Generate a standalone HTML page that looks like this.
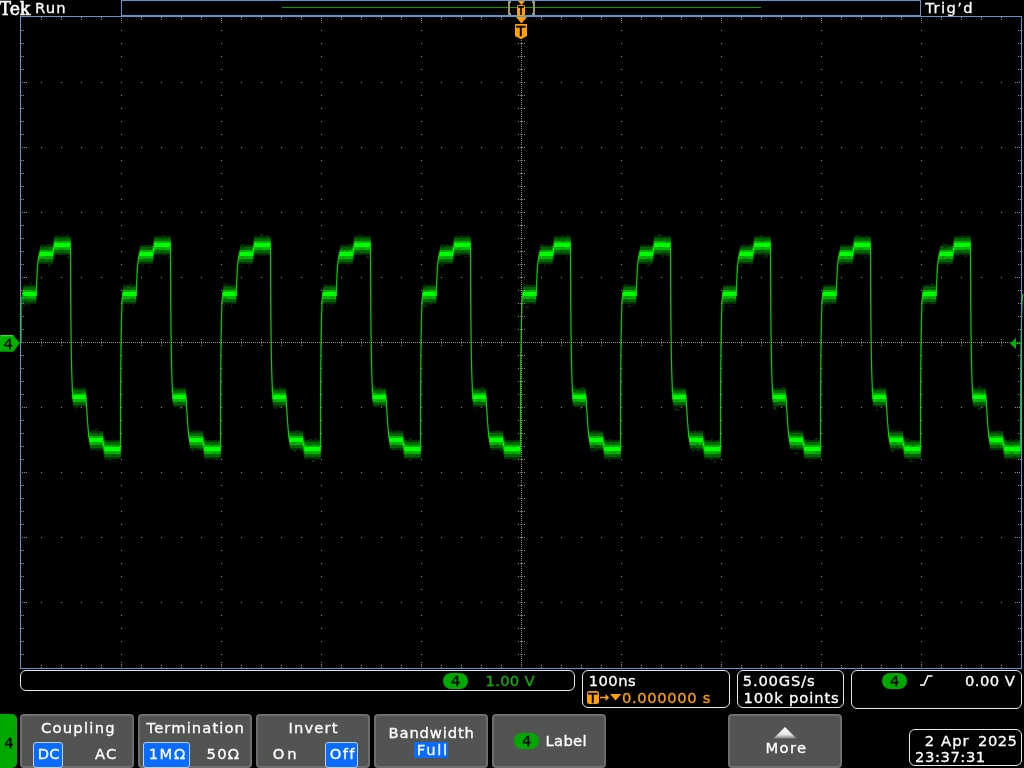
<!DOCTYPE html><html><head><meta charset="utf-8"><title>Tek</title><style>
html,body{margin:0;padding:0;background:#000;}
body{width:1024px;height:768px;position:relative;overflow:hidden;font-family:"DejaVu Sans","Liberation Sans",sans-serif;color:#fff;}
.t{position:absolute;white-space:nowrap;line-height:0;-webkit-text-stroke:0.3px currentColor;}
.box{position:absolute;border:1px solid #e8e8e8;border-radius:6px;box-sizing:border-box;}
.btn{position:absolute;top:714px;height:54px;width:114px;background:#525452;border-radius:4px;box-sizing:border-box;border:2px solid #6e6e6e;}
.sel{position:absolute;background:#0a6cff;border:1px solid #bccdee;border-radius:3px;box-sizing:border-box;}
.pill{position:absolute;width:25px;height:16px;border-radius:8px;background:#00a800;}
</style></head><body>
<div class="btn" style="left:20px"></div>
<div class="btn" style="left:138px"></div>
<div class="btn" style="left:256px"></div>
<div class="btn" style="left:374px"></div>
<div class="btn" style="left:492px"></div>
<div class="btn" style="left:728px"></div>
<div style="position:absolute;left:-6px;top:714px;width:23px;height:54px;background:#00a800;border-radius:5px"></div>
<div class="sel" style="left:33px;top:742px;width:30px;height:26px"></div>
<div class="sel" style="left:143px;top:742px;width:47px;height:26px"></div>
<div class="sel" style="left:325px;top:742px;width:33px;height:26px"></div>
<div style="position:absolute;left:414px;top:742px;width:34px;height:16px;background:#0a6cff"></div>
<div class="box" style="left:20px;top:670px;width:555px;height:21px"></div>
<div class="box" style="left:582px;top:670px;width:148px;height:38px"></div>
<div class="box" style="left:737px;top:670px;width:107px;height:38px"></div>
<div class="box" style="left:851px;top:670px;width:171px;height:39px"></div>
<div class="box" style="left:909px;top:729px;width:113px;height:37px"></div>
<div class="pill" style="left:443px;top:673px"></div>
<div class="pill" style="left:882px;top:673px"></div>
<div class="pill" style="left:514px;top:733px"></div>
<div style="position:absolute;left:587px;top:691px;width:12px;height:13px;background:#ffa000;border-radius:2.5px"></div>
<svg width="1024" height="768" viewBox="0 0 1024 768" style="position:absolute;left:0;top:0">
<path d="M23.50 285H36.2V304H21.30zM40.30 245H52.9V264H38.10zM52.90 240.5H54.1V259.5H52.90zM54.10 236H70.7V255H54.10zM71.30 388H86.1V407H73.50zM88.10 431H103.1V450H90.30zM103.10 435.5H104.3V454.5H103.10zM104.30 440H120.7V459H104.30zM123.50 285H136.2V304H121.30zM140.30 245H152.9V264H138.10zM152.90 240.5H154.1V259.5H152.90zM154.10 236H170.7V255H154.10zM171.30 388H186.1V407H173.50zM188.10 431H203.1V450H190.30zM203.10 435.5H204.3V454.5H203.10zM204.30 440H220.7V459H204.30zM223.50 285H236.2V304H221.30zM240.30 245H252.9V264H238.10zM252.90 240.5H254.1V259.5H252.90zM254.10 236H270.7V255H254.10zM271.30 388H286.1V407H273.50zM288.10 431H303.1V450H290.30zM303.10 435.5H304.3V454.5H303.10zM304.30 440H320.7V459H304.30zM323.50 285H336.2V304H321.30zM340.30 245H352.9V264H338.10zM352.90 240.5H354.1V259.5H352.90zM354.10 236H370.7V255H354.10zM371.30 388H386.1V407H373.50zM388.10 431H403.1V450H390.30zM403.10 435.5H404.3V454.5H403.10zM404.30 440H420.7V459H404.30zM423.50 285H436.2V304H421.30zM440.30 245H452.9V264H438.10zM452.90 240.5H454.1V259.5H452.90zM454.10 236H470.7V255H454.10zM471.30 388H486.1V407H473.50zM488.10 431H503.1V450H490.30zM503.10 435.5H504.3V454.5H503.10zM504.30 440H520.7V459H504.30zM523.50 285H536.2V304H521.30zM540.30 245H552.9V264H538.10zM552.90 240.5H554.1V259.5H552.90zM554.10 236H570.7V255H554.10zM571.30 388H586.1V407H573.50zM588.10 431H603.1V450H590.30zM603.10 435.5H604.3V454.5H603.10zM604.30 440H620.7V459H604.30zM623.50 285H636.2V304H621.30zM640.30 245H652.9V264H638.10zM652.90 240.5H654.1V259.5H652.90zM654.10 236H670.7V255H654.10zM671.30 388H686.1V407H673.50zM688.10 431H703.1V450H690.30zM703.10 435.5H704.3V454.5H703.10zM704.30 440H720.7V459H704.30zM723.50 285H736.2V304H721.30zM740.30 245H752.9V264H738.10zM752.90 240.5H754.1V259.5H752.90zM754.10 236H770.7V255H754.10zM771.30 388H786.1V407H773.50zM788.10 431H803.1V450H790.30zM803.10 435.5H804.3V454.5H803.10zM804.30 440H820.7V459H804.30zM823.50 285H836.2V304H821.30zM840.30 245H852.9V264H838.10zM852.90 240.5H854.1V259.5H852.90zM854.10 236H870.7V255H854.10zM871.30 388H886.1V407H873.50zM888.10 431H903.1V450H890.30zM903.10 435.5H904.3V454.5H903.10zM904.30 440H920.7V459H904.30zM923.50 285H936.2V304H921.30zM940.30 245H952.9V264H938.10zM952.90 240.5H954.1V259.5H952.90zM954.10 236H970.7V255H954.10zM971.30 388H986.1V407H973.50zM988.10 431H1003.1V450H990.30zM1003.10 435.5H1004.3V454.5H1003.10zM1004.30 440H1020.7V459H1004.30z" fill="#003400"/>
<path d="M23.27 287H36.2V302H21.53zM40.07 247H52.9V262H38.33zM52.90 242.5H54.1V257.5H52.90zM54.10 238H70.7V253H54.10zM71.53 390H86.1V405H73.27zM88.33 433H103.1V448H90.07zM103.10 437.5H104.3V452.5H103.10zM104.30 442H120.7V457H104.30zM123.27 287H136.2V302H121.53zM140.07 247H152.9V262H138.33zM152.90 242.5H154.1V257.5H152.90zM154.10 238H170.7V253H154.10zM171.53 390H186.1V405H173.27zM188.33 433H203.1V448H190.07zM203.10 437.5H204.3V452.5H203.10zM204.30 442H220.7V457H204.30zM223.27 287H236.2V302H221.53zM240.07 247H252.9V262H238.33zM252.90 242.5H254.1V257.5H252.90zM254.10 238H270.7V253H254.10zM271.53 390H286.1V405H273.27zM288.33 433H303.1V448H290.07zM303.10 437.5H304.3V452.5H303.10zM304.30 442H320.7V457H304.30zM323.27 287H336.2V302H321.53zM340.07 247H352.9V262H338.33zM352.90 242.5H354.1V257.5H352.90zM354.10 238H370.7V253H354.10zM371.53 390H386.1V405H373.27zM388.33 433H403.1V448H390.07zM403.10 437.5H404.3V452.5H403.10zM404.30 442H420.7V457H404.30zM423.27 287H436.2V302H421.53zM440.07 247H452.9V262H438.33zM452.90 242.5H454.1V257.5H452.90zM454.10 238H470.7V253H454.10zM471.53 390H486.1V405H473.27zM488.33 433H503.1V448H490.07zM503.10 437.5H504.3V452.5H503.10zM504.30 442H520.7V457H504.30zM523.27 287H536.2V302H521.53zM540.07 247H552.9V262H538.33zM552.90 242.5H554.1V257.5H552.90zM554.10 238H570.7V253H554.10zM571.53 390H586.1V405H573.27zM588.33 433H603.1V448H590.07zM603.10 437.5H604.3V452.5H603.10zM604.30 442H620.7V457H604.30zM623.27 287H636.2V302H621.53zM640.07 247H652.9V262H638.33zM652.90 242.5H654.1V257.5H652.90zM654.10 238H670.7V253H654.10zM671.53 390H686.1V405H673.27zM688.33 433H703.1V448H690.07zM703.10 437.5H704.3V452.5H703.10zM704.30 442H720.7V457H704.30zM723.27 287H736.2V302H721.53zM740.07 247H752.9V262H738.33zM752.90 242.5H754.1V257.5H752.90zM754.10 238H770.7V253H754.10zM771.53 390H786.1V405H773.27zM788.33 433H803.1V448H790.07zM803.10 437.5H804.3V452.5H803.10zM804.30 442H820.7V457H804.30zM823.27 287H836.2V302H821.53zM840.07 247H852.9V262H838.33zM852.90 242.5H854.1V257.5H852.90zM854.10 238H870.7V253H854.10zM871.53 390H886.1V405H873.27zM888.33 433H903.1V448H890.07zM903.10 437.5H904.3V452.5H903.10zM904.30 442H920.7V457H904.30zM923.27 287H936.2V302H921.53zM940.07 247H952.9V262H938.33zM952.90 242.5H954.1V257.5H952.90zM954.10 238H970.7V253H954.10zM971.53 390H986.1V405H973.27zM988.33 433H1003.1V448H990.07zM1003.10 437.5H1004.3V452.5H1003.10zM1004.30 442H1020.7V457H1004.30z" fill="#006800"/>
<path d="M22.92 290H36.2V299H21.88zM39.72 250H52.9V259H38.68zM52.90 245.5H54.1V254.5H52.90zM54.10 241H70.7V250H54.10zM71.88 393H86.1V402H72.92zM88.68 436H103.1V445H89.72zM103.10 440.5H104.3V449.5H103.10zM104.30 445H120.7V454H104.30zM122.92 290H136.2V299H121.88zM139.72 250H152.9V259H138.68zM152.90 245.5H154.1V254.5H152.90zM154.10 241H170.7V250H154.10zM171.88 393H186.1V402H172.92zM188.68 436H203.1V445H189.72zM203.10 440.5H204.3V449.5H203.10zM204.30 445H220.7V454H204.30zM222.92 290H236.2V299H221.88zM239.72 250H252.9V259H238.68zM252.90 245.5H254.1V254.5H252.90zM254.10 241H270.7V250H254.10zM271.88 393H286.1V402H272.92zM288.68 436H303.1V445H289.72zM303.10 440.5H304.3V449.5H303.10zM304.30 445H320.7V454H304.30zM322.92 290H336.2V299H321.88zM339.72 250H352.9V259H338.68zM352.90 245.5H354.1V254.5H352.90zM354.10 241H370.7V250H354.10zM371.88 393H386.1V402H372.92zM388.68 436H403.1V445H389.72zM403.10 440.5H404.3V449.5H403.10zM404.30 445H420.7V454H404.30zM422.92 290H436.2V299H421.88zM439.72 250H452.9V259H438.68zM452.90 245.5H454.1V254.5H452.90zM454.10 241H470.7V250H454.10zM471.88 393H486.1V402H472.92zM488.68 436H503.1V445H489.72zM503.10 440.5H504.3V449.5H503.10zM504.30 445H520.7V454H504.30zM522.92 290H536.2V299H521.88zM539.72 250H552.9V259H538.68zM552.90 245.5H554.1V254.5H552.90zM554.10 241H570.7V250H554.10zM571.88 393H586.1V402H572.92zM588.68 436H603.1V445H589.72zM603.10 440.5H604.3V449.5H603.10zM604.30 445H620.7V454H604.30zM622.92 290H636.2V299H621.88zM639.72 250H652.9V259H638.68zM652.90 245.5H654.1V254.5H652.90zM654.10 241H670.7V250H654.10zM671.88 393H686.1V402H672.92zM688.68 436H703.1V445H689.72zM703.10 440.5H704.3V449.5H703.10zM704.30 445H720.7V454H704.30zM722.92 290H736.2V299H721.88zM739.72 250H752.9V259H738.68zM752.90 245.5H754.1V254.5H752.90zM754.10 241H770.7V250H754.10zM771.88 393H786.1V402H772.92zM788.68 436H803.1V445H789.72zM803.10 440.5H804.3V449.5H803.10zM804.30 445H820.7V454H804.30zM822.92 290H836.2V299H821.88zM839.72 250H852.9V259H838.68zM852.90 245.5H854.1V254.5H852.90zM854.10 241H870.7V250H854.10zM871.88 393H886.1V402H872.92zM888.68 436H903.1V445H889.72zM903.10 440.5H904.3V449.5H903.10zM904.30 445H920.7V454H904.30zM922.92 290H936.2V299H921.88zM939.72 250H952.9V259H938.68zM952.90 245.5H954.1V254.5H952.90zM954.10 241H970.7V250H954.10zM971.88 393H986.1V402H972.92zM988.68 436H1003.1V445H989.72zM1003.10 440.5H1004.3V449.5H1003.10zM1004.30 445H1020.7V454H1004.30z" fill="#00b400"/>
<path d="M22.69 292H36.2V296H22.23zM39.49 252H52.9V256H39.03zM52.90 247.5H54.1V251.5H52.90zM54.10 243H70.7V247H54.10zM72.11 395H86.1V399H72.57zM88.91 438H103.1V442H89.37zM103.10 442.5H104.3V446.5H103.10zM104.30 447H120.7V451H104.30zM122.69 292H136.2V296H122.23zM139.49 252H152.9V256H139.03zM152.90 247.5H154.1V251.5H152.90zM154.10 243H170.7V247H154.10zM172.11 395H186.1V399H172.57zM188.91 438H203.1V442H189.37zM203.10 442.5H204.3V446.5H203.10zM204.30 447H220.7V451H204.30zM222.69 292H236.2V296H222.23zM239.49 252H252.9V256H239.03zM252.90 247.5H254.1V251.5H252.90zM254.10 243H270.7V247H254.10zM272.11 395H286.1V399H272.57zM288.91 438H303.1V442H289.37zM303.10 442.5H304.3V446.5H303.10zM304.30 447H320.7V451H304.30zM322.69 292H336.2V296H322.23zM339.49 252H352.9V256H339.03zM352.90 247.5H354.1V251.5H352.90zM354.10 243H370.7V247H354.10zM372.11 395H386.1V399H372.57zM388.91 438H403.1V442H389.37zM403.10 442.5H404.3V446.5H403.10zM404.30 447H420.7V451H404.30zM422.69 292H436.2V296H422.23zM439.49 252H452.9V256H439.03zM452.90 247.5H454.1V251.5H452.90zM454.10 243H470.7V247H454.10zM472.11 395H486.1V399H472.57zM488.91 438H503.1V442H489.37zM503.10 442.5H504.3V446.5H503.10zM504.30 447H520.7V451H504.30zM522.69 292H536.2V296H522.23zM539.49 252H552.9V256H539.03zM552.90 247.5H554.1V251.5H552.90zM554.10 243H570.7V247H554.10zM572.11 395H586.1V399H572.57zM588.91 438H603.1V442H589.37zM603.10 442.5H604.3V446.5H603.10zM604.30 447H620.7V451H604.30zM622.69 292H636.2V296H622.23zM639.49 252H652.9V256H639.03zM652.90 247.5H654.1V251.5H652.90zM654.10 243H670.7V247H654.10zM672.11 395H686.1V399H672.57zM688.91 438H703.1V442H689.37zM703.10 442.5H704.3V446.5H703.10zM704.30 447H720.7V451H704.30zM722.69 292H736.2V296H722.23zM739.49 252H752.9V256H739.03zM752.90 247.5H754.1V251.5H752.90zM754.10 243H770.7V247H754.10zM772.11 395H786.1V399H772.57zM788.91 438H803.1V442H789.37zM803.10 442.5H804.3V446.5H803.10zM804.30 447H820.7V451H804.30zM822.69 292H836.2V296H822.23zM839.49 252H852.9V256H839.03zM852.90 247.5H854.1V251.5H852.90zM854.10 243H870.7V247H854.10zM872.11 395H886.1V399H872.57zM888.91 438H903.1V442H889.37zM903.10 442.5H904.3V446.5H903.10zM904.30 447H920.7V451H904.30zM922.69 292H936.2V296H922.23zM939.49 252H952.9V256H939.03zM952.90 247.5H954.1V251.5H952.90zM954.10 243H970.7V247H954.10zM972.11 395H986.1V399H972.57zM988.91 438H1003.1V442H989.37zM1003.10 442.5H1004.3V446.5H1003.10zM1004.30 447H1020.7V451H1004.30z" fill="#00ff00"/>
<path d="M28 304h1v2h-1zM23 306h1v2h-1zM24 304h2v1h-2zM31 283h1v1h-1zM29 283h3v1h-3zM50 244h1v1h-1zM48 264h1v1h-1zM49 264h1v2h-1zM48 266h3v1h-3zM47 244h3v1h-3zM57 235h1v1h-1zM67 234h1v2h-1zM67 256h2v2h-2zM66 235h3v2h-3zM62 234h2v1h-2zM75 387h1v2h-1zM76 407h1v2h-1zM75 387h2v1h-2zM75 407h3v1h-3zM82 387h2v2h-2zM91 450h1v1h-1zM92 430h2v2h-2zM95 429h3v1h-3zM97 450h3v1h-3zM94 430h1v1h-1zM115 461h1v1h-1zM112 439h1v2h-1zM113 460h2v1h-2zM106 459h2v1h-2zM109 459h2v2h-2zM124 284h1v1h-1zM123 304h1v1h-1zM133 304h1v2h-1zM130 284h2v2h-2zM131 283h1v1h-1zM148 266h1v1h-1zM142 266h1v1h-1zM142 264h1v2h-1zM141 244h1v2h-1zM148 266h3v1h-3zM163 255h1v1h-1zM162 235h3v1h-3zM166 255h1v1h-1zM159 257h2v1h-2zM168 256h1v2h-1zM180 408h3v1h-3zM179 407h2v2h-2zM177 386h1v1h-1zM174 387h1v1h-1zM173 387h1v1h-1zM195 430h3v2h-3zM192 450h1v2h-1zM193 430h1v1h-1zM190 430h1v1h-1zM200 450h2v1h-2zM217 459h1v1h-1zM206 438h1v1h-1zM216 459h2v1h-2zM206 460h1v1h-1zM214 459h2v1h-2zM231 283h1v1h-1zM224 304h1v2h-1zM223 283h3v1h-3zM227 283h1v2h-1zM231 305h1v2h-1zM248 265h1v1h-1zM250 264h1v1h-1zM240 266h3v1h-3zM248 265h1v2h-1zM241 244h3v1h-3zM266 235h3v2h-3zM264 255h2v1h-2zM263 255h1v1h-1zM260 255h1v1h-1zM260 234h3v2h-3zM279 407h2v1h-2zM274 386h2v1h-2zM278 386h3v1h-3zM273 387h2v1h-2zM274 407h3v2h-3zM300 450h2v1h-2zM298 430h1v1h-1zM296 430h2v1h-2zM294 450h2v2h-2zM293 450h2v2h-2zM312 460h3v2h-3zM309 439h3v1h-3zM318 459h1v1h-1zM315 439h2v2h-2zM314 438h1v1h-1zM331 283h1v1h-1zM326 305h1v2h-1zM327 305h1v1h-1zM331 305h3v1h-3zM324 284h1v2h-1zM350 244h3v1h-3zM347 265h1v1h-1zM346 265h2v1h-2zM343 266h1v1h-1zM348 244h1v1h-1zM367 256h2v1h-2zM357 235h1v1h-1zM358 234h3v1h-3zM366 257h3v1h-3zM361 235h3v1h-3zM373 386h3v1h-3zM374 387h1v1h-1zM374 387h2v1h-2zM378 387h1v2h-1zM378 387h2v1h-2zM392 450h1v1h-1zM400 450h1v2h-1zM398 430h2v1h-2zM391 430h1v2h-1zM391 429h1v1h-1zM409 438h2v1h-2zM410 459h1v2h-1zM409 460h1v1h-1zM406 438h1v1h-1zM409 439h3v1h-3zM423 304h2v2h-2zM428 304h1v1h-1zM424 283h1v1h-1zM431 283h3v1h-3zM424 305h3v2h-3zM441 264h3v1h-3zM447 244h1v1h-1zM440 265h1v1h-1zM441 265h2v2h-2zM442 244h1v1h-1zM461 235h1v1h-1zM467 234h1v2h-1zM468 256h1v1h-1zM457 255h3v1h-3zM464 256h2v1h-2zM481 386h1v2h-1zM475 408h1v1h-1zM481 386h1v2h-1zM479 386h1v1h-1zM482 387h1v1h-1zM500 450h2v1h-2zM494 452h1v2h-1zM490 452h2v1h-2zM498 430h1v2h-1zM500 451h3v1h-3zM513 459h1v2h-1zM506 438h1v1h-1zM515 439h2v1h-2zM514 459h2v1h-2zM512 459h2v1h-2zM523 283h1v2h-1zM523 284h3v1h-3zM525 306h1v1h-1zM523 284h1v1h-1zM526 306h3v2h-3zM544 265h2v1h-2zM541 244h1v1h-1zM543 244h1v2h-1zM545 264h1v1h-1zM549 264h1v2h-1zM567 256h1v1h-1zM567 234h1v2h-1zM568 235h2v2h-2zM566 257h1v2h-1zM562 235h1v1h-1zM580 407h2v2h-2zM573 386h3v1h-3zM581 387h1v1h-1zM573 408h1v1h-1zM582 387h2v1h-2zM595 450h1v1h-1zM591 451h3v1h-3zM595 430h1v1h-1zM596 450h1v2h-1zM593 430h3v2h-3zM609 459h2v2h-2zM611 439h1v1h-1zM609 460h2v1h-2zM608 439h1v1h-1zM608 461h1v1h-1zM629 306h3v1h-3zM633 305h1v1h-1zM633 304h1v1h-1zM628 305h2v2h-2zM624 284h3v1h-3zM648 265h1v1h-1zM648 264h2v2h-2zM647 265h1v1h-1zM646 265h1v2h-1zM645 244h1v1h-1zM666 255h3v1h-3zM668 257h1v1h-1zM661 235h1v2h-1zM662 255h2v2h-2zM658 234h3v2h-3zM674 387h2v2h-2zM674 409h1v1h-1zM675 387h3v1h-3zM676 409h3v2h-3zM675 408h1v2h-1zM692 450h2v2h-2zM699 451h3v1h-3zM697 450h2v1h-2zM700 430h1v2h-1zM695 429h1v2h-1zM711 459h3v1h-3zM714 461h2v2h-2zM711 460h1v1h-1zM718 439h1v1h-1zM711 439h2v2h-2zM723 305h3v1h-3zM724 306h1v1h-1zM729 305h1v1h-1zM728 306h1v1h-1zM731 306h2v1h-2zM750 244h3v1h-3zM750 264h1v1h-1zM740 266h1v1h-1zM743 244h1v1h-1zM740 265h2v2h-2zM765 255h3v2h-3zM758 257h1v1h-1zM761 256h1v1h-1zM763 257h3v1h-3zM760 235h2v1h-2zM782 387h1v2h-1zM783 387h3v2h-3zM774 409h3v1h-3zM776 387h1v2h-1zM773 407h3v2h-3zM795 452h3v2h-3zM792 429h1v1h-1zM795 430h1v2h-1zM797 430h1v1h-1zM799 430h1v1h-1zM815 438h3v2h-3zM807 439h2v2h-2zM809 460h1v2h-1zM812 459h1v1h-1zM811 460h1v1h-1zM829 284h1v1h-1zM829 304h1v1h-1zM825 304h1v2h-1zM826 284h1v1h-1zM824 305h2v1h-2zM840 264h2v1h-2zM845 244h1v1h-1zM841 264h2v1h-2zM841 264h1v1h-1zM850 264h1v1h-1zM856 235h3v1h-3zM865 235h1v1h-1zM864 256h1v1h-1zM859 257h1v1h-1zM865 257h3v1h-3zM878 387h1v2h-1zM878 387h1v2h-1zM880 386h1v1h-1zM876 409h2v2h-2zM879 387h1v1h-1zM891 429h1v1h-1zM891 450h3v2h-3zM898 429h2v1h-2zM891 430h3v2h-3zM899 452h1v1h-1zM909 460h3v2h-3zM906 438h2v2h-2zM908 439h1v1h-1zM909 439h1v1h-1zM912 461h3v1h-3zM931 283h2v1h-2zM932 304h1v1h-1zM931 284h1v1h-1zM932 284h2v1h-2zM924 306h2v1h-2zM945 244h3v1h-3zM943 243h2v1h-2zM942 264h1v1h-1zM947 264h1v1h-1zM947 265h2v1h-2zM965 255h1v1h-1zM967 235h3v2h-3zM961 235h2v1h-2zM964 256h3v1h-3zM956 255h3v1h-3zM981 407h3v1h-3zM978 407h1v2h-1zM978 386h3v2h-3zM974 386h1v1h-1zM978 408h3v2h-3zM993 450h1v1h-1zM990 430h1v2h-1zM1000 451h1v1h-1zM990 430h1v2h-1zM998 430h1v1h-1zM1012 460h1v1h-1zM1016 439h2v2h-2zM1009 439h2v1h-2zM1006 460h2v1h-2zM1015 439h1v1h-1z" fill="#003000" shape-rendering="crispEdges"/>
<path d="M24 301h3v1h-3zM23 286h3v1h-3zM26 285h3v1h-3zM32 301h3v1h-3zM23 285h1v1h-1zM31 299h1v1h-1zM43 248h1v1h-1zM41 259h3v1h-3zM48 260h2v1h-2zM47 246h2v1h-2zM41 261h3v1h-3zM42 247h2v1h-2zM61 237h1v1h-1zM63 239h1v1h-1zM60 239h1v1h-1zM62 253h2v1h-2zM57 253h1v1h-1zM62 250h3v1h-3zM81 388h3v1h-3zM80 406h3v1h-3zM79 404h2v1h-2zM79 405h1v1h-1zM79 391h1v1h-1zM74 405h1v1h-1zM95 445h3v1h-3zM97 433h3v1h-3zM98 434h1v1h-1zM98 433h2v1h-2zM98 449h1v1h-1zM94 432h3v1h-3zM111 441h2v1h-2zM109 443h1v1h-1zM113 455h1v1h-1zM109 440h2v1h-2zM113 455h3v1h-3zM116 441h1v1h-1zM124 287h3v1h-3zM129 288h1v1h-1zM123 288h2v1h-2zM127 288h3v1h-3zM132 299h2v1h-2zM131 287h2v1h-2zM148 248h1v1h-1zM143 245h2v1h-2zM141 262h3v1h-3zM148 246h1v1h-1zM147 263h2v1h-2zM149 248h3v1h-3zM166 238h2v1h-2zM160 253h1v1h-1zM159 237h3v1h-3zM162 238h2v1h-2zM166 238h1v1h-1zM167 254h2v1h-2zM179 402h3v1h-3zM179 406h1v1h-1zM181 405h3v1h-3zM178 402h1v1h-1zM173 390h3v1h-3zM179 402h1v1h-1zM194 449h2v1h-2zM192 446h2v1h-2zM190 431h2v1h-2zM190 449h1v1h-1zM198 449h1v1h-1zM197 448h1v1h-1zM217 440h2v1h-2zM213 442h1v1h-1zM210 440h2v1h-2zM210 455h2v1h-2zM214 443h2v1h-2zM206 443h2v1h-2zM232 300h2v1h-2zM230 299h1v1h-1zM232 287h3v1h-3zM223 303h3v1h-3zM229 303h3v1h-3zM225 303h3v1h-3zM244 248h1v1h-1zM243 262h3v1h-3zM247 246h2v1h-2zM247 259h3v1h-3zM240 248h3v1h-3zM241 247h3v1h-3zM263 252h2v1h-2zM259 237h1v1h-1zM265 238h1v1h-1zM267 250h3v1h-3zM261 254h1v1h-1zM260 251h1v1h-1zM274 404h2v1h-2zM277 402h1v1h-1zM274 402h1v1h-1zM275 402h1v1h-1zM279 403h3v1h-3zM276 404h2v1h-2zM296 433h1v1h-1zM292 434h1v1h-1zM298 449h2v1h-2zM293 446h2v1h-2zM297 433h2v1h-2zM298 434h1v1h-1zM309 456h2v1h-2zM316 456h2v1h-2zM310 442h1v1h-1zM306 457h2v1h-2zM315 440h2v1h-2zM307 458h2v1h-2zM332 301h1v1h-1zM327 285h1v1h-1zM323 299h3v1h-3zM330 300h2v1h-2zM326 303h2v1h-2zM326 288h3v1h-3zM343 248h2v1h-2zM343 248h2v1h-2zM344 246h2v1h-2zM349 247h2v1h-2zM343 261h2v1h-2zM340 247h3v1h-3zM356 250h1v1h-1zM357 252h2v1h-2zM357 239h3v1h-3zM362 250h2v1h-2zM362 236h1v1h-1zM367 239h2v1h-2zM382 389h3v1h-3zM373 389h1v1h-1zM380 405h3v1h-3zM379 404h2v1h-2zM380 405h1v1h-1zM375 402h1v1h-1zM397 448h3v1h-3zM392 433h1v1h-1zM396 434h2v1h-2zM398 432h3v1h-3zM394 445h2v1h-2zM399 446h2v1h-2zM410 441h1v1h-1zM406 443h1v1h-1zM407 458h2v1h-2zM408 454h2v1h-2zM416 441h1v1h-1zM416 455h3v1h-3zM425 303h3v1h-3zM424 287h3v1h-3zM429 299h3v1h-3zM429 299h2v1h-2zM429 299h1v1h-1zM432 301h2v1h-2zM442 247h3v1h-3zM441 261h1v1h-1zM447 259h1v1h-1zM442 262h1v1h-1zM445 261h1v1h-1zM441 247h3v1h-3zM460 239h3v1h-3zM462 251h2v1h-2zM463 253h3v1h-3zM458 236h1v1h-1zM465 253h2v1h-2zM459 253h2v1h-2zM480 390h2v1h-2zM476 403h1v1h-1zM482 390h2v1h-2zM478 402h3v1h-3zM480 402h1v1h-1zM481 391h2v1h-2zM494 446h2v1h-2zM499 446h1v1h-1zM495 448h1v1h-1zM493 431h1v1h-1zM494 445h3v1h-3zM494 446h3v1h-3zM509 457h2v1h-2zM508 440h1v1h-1zM509 442h3v1h-3zM513 441h1v1h-1zM516 454h1v1h-1zM512 440h2v1h-2zM525 299h3v1h-3zM524 285h2v1h-2zM530 303h3v1h-3zM523 301h2v1h-2zM530 302h1v1h-1zM525 286h1v1h-1zM548 262h2v1h-2zM548 245h3v1h-3zM540 248h2v1h-2zM549 248h2v1h-2zM546 246h3v1h-3zM549 247h1v1h-1zM559 236h1v1h-1zM556 237h3v1h-3zM566 250h3v1h-3zM563 238h1v1h-1zM557 239h3v1h-3zM560 251h2v1h-2zM573 391h3v1h-3zM577 388h1v1h-1zM578 389h2v1h-2zM580 390h3v1h-3zM580 403h3v1h-3zM581 390h2v1h-2zM599 431h3v1h-3zM595 446h3v1h-3zM598 448h1v1h-1zM598 446h3v1h-3zM592 448h2v1h-2zM594 434h3v1h-3zM617 456h2v1h-2zM610 441h1v1h-1zM616 454h1v1h-1zM609 457h2v1h-2zM606 456h1v1h-1zM612 443h3v1h-3zM625 301h2v1h-2zM630 285h2v1h-2zM632 303h2v1h-2zM625 300h3v1h-3zM623 302h2v1h-2zM624 299h1v1h-1zM646 245h2v1h-2zM640 261h1v1h-1zM646 260h3v1h-3zM649 246h2v1h-2zM643 261h2v1h-2zM648 261h1v1h-1zM660 239h2v1h-2zM666 251h2v1h-2zM663 252h2v1h-2zM665 237h3v1h-3zM666 238h2v1h-2zM660 236h2v1h-2zM677 405h1v1h-1zM676 389h3v1h-3zM680 389h3v1h-3zM681 402h1v1h-1zM679 390h1v1h-1zM680 406h2v1h-2zM690 446h3v1h-3zM691 448h3v1h-3zM697 431h1v1h-1zM693 447h3v1h-3zM692 432h2v1h-2zM695 448h2v1h-2zM716 440h1v1h-1zM712 458h3v1h-3zM712 440h3v1h-3zM712 441h2v1h-2zM706 443h1v1h-1zM713 440h3v1h-3zM725 285h2v1h-2zM728 301h1v1h-1zM732 285h3v1h-3zM730 303h3v1h-3zM723 301h1v1h-1zM732 301h3v1h-3zM743 247h2v1h-2zM740 247h2v1h-2zM741 263h2v1h-2zM747 259h2v1h-2zM740 245h3v1h-3zM740 245h1v1h-1zM756 251h3v1h-3zM765 236h3v1h-3zM758 250h3v1h-3zM765 239h2v1h-2zM762 252h2v1h-2zM765 253h1v1h-1zM776 388h2v1h-2zM779 406h2v1h-2zM774 403h3v1h-3zM774 404h1v1h-1zM782 402h3v1h-3zM781 405h2v1h-2zM798 431h3v1h-3zM791 434h1v1h-1zM799 434h2v1h-2zM794 447h2v1h-2zM791 433h2v1h-2zM794 446h1v1h-1zM808 454h1v1h-1zM811 458h1v1h-1zM806 454h1v1h-1zM814 457h3v1h-3zM806 442h1v1h-1zM811 443h1v1h-1zM830 301h1v1h-1zM823 286h3v1h-3zM830 300h2v1h-2zM826 286h2v1h-2zM828 300h1v1h-1zM826 285h3v1h-3zM844 259h1v1h-1zM843 261h2v1h-2zM844 248h1v1h-1zM841 259h2v1h-2zM846 245h1v1h-1zM844 245h1v1h-1zM858 238h1v1h-1zM865 239h3v1h-3zM865 239h2v1h-2zM856 254h1v1h-1zM862 236h3v1h-3zM864 251h2v1h-2zM880 406h2v1h-2zM873 406h3v1h-3zM875 391h1v1h-1zM874 390h1v1h-1zM875 402h1v1h-1zM877 388h3v1h-3zM892 448h3v1h-3zM896 431h1v1h-1zM896 447h3v1h-3zM899 449h3v1h-3zM890 431h2v1h-2zM895 447h2v1h-2zM916 440h1v1h-1zM906 454h3v1h-3zM916 454h3v1h-3zM916 440h3v1h-3zM915 454h1v1h-1zM907 440h3v1h-3zM932 288h3v1h-3zM929 303h1v1h-1zM928 303h2v1h-2zM927 302h3v1h-3zM930 285h2v1h-2zM926 288h2v1h-2zM948 247h1v1h-1zM946 260h2v1h-2zM942 248h3v1h-3zM949 259h3v1h-3zM948 262h1v1h-1zM944 247h3v1h-3zM960 254h1v1h-1zM960 252h1v1h-1zM965 239h2v1h-2zM957 251h2v1h-2zM965 251h1v1h-1zM959 236h2v1h-2zM982 391h1v1h-1zM979 404h2v1h-2zM980 403h3v1h-3zM981 389h3v1h-3zM975 403h2v1h-2zM978 402h1v1h-1zM991 431h3v1h-3zM990 433h1v1h-1zM997 445h3v1h-3zM998 433h3v1h-3zM999 447h1v1h-1zM999 433h1v1h-1zM1013 456h3v1h-3zM1006 443h1v1h-1zM1012 440h3v1h-3zM1013 443h1v1h-1zM1009 440h1v1h-1zM1008 442h3v1h-3z" fill="#000" fill-opacity="0.32" shape-rendering="crispEdges"/>
<path d="M29 298h2v1h-2zM24 296h4v1h-4zM31 291h4v1h-4zM24 298h4v1h-4zM47 250h3v1h-3zM41 258h4v1h-4zM45 256h3v1h-3zM47 257h4v1h-4zM58 249h3v1h-3zM60 248h4v1h-4zM61 248h4v1h-4zM59 241h2v1h-2zM75 399h2v1h-2zM73 393h2v1h-2zM75 393h4v1h-4zM78 393h4v1h-4zM94 442h4v1h-4zM92 437h3v1h-3zM98 444h4v1h-4zM95 437h4v1h-4zM112 446h4v1h-4zM113 452h2v1h-2zM116 445h3v1h-3zM112 452h3v1h-3zM123 296h4v1h-4zM130 298h4v1h-4zM131 298h3v1h-3zM125 291h4v1h-4zM144 258h3v1h-3zM148 258h3v1h-3zM143 258h4v1h-4zM144 251h4v1h-4zM162 248h3v1h-3zM159 247h3v1h-3zM157 247h4v1h-4zM156 249h3v1h-3zM173 393h4v1h-4zM177 401h2v1h-2zM176 399h2v1h-2zM174 393h3v1h-3zM191 443h4v1h-4zM197 443h4v1h-4zM198 437h3v1h-3zM193 437h3v1h-3zM211 445h2v1h-2zM211 445h3v1h-3zM213 453h3v1h-3zM216 446h2v1h-2zM223 298h4v1h-4zM226 290h2v1h-2zM223 296h2v1h-2zM224 297h3v1h-3zM245 256h3v1h-3zM242 257h2v1h-2zM240 256h3v1h-3zM241 251h4v1h-4zM259 248h3v1h-3zM262 242h2v1h-2zM256 248h3v1h-3zM262 242h3v1h-3zM273 400h4v1h-4zM281 394h4v1h-4zM274 400h2v1h-2zM280 394h4v1h-4zM291 442h2v1h-2zM298 442h2v1h-2zM293 442h3v1h-3zM293 443h2v1h-2zM313 446h3v1h-3zM307 446h2v1h-2zM308 445h4v1h-4zM316 445h3v1h-3zM323 296h3v1h-3zM323 291h2v1h-2zM330 297h4v1h-4zM324 291h3v1h-3zM346 251h2v1h-2zM340 251h4v1h-4zM346 250h2v1h-2zM342 257h3v1h-3zM361 248h4v1h-4zM359 247h3v1h-3zM363 248h2v1h-2zM359 248h4v1h-4zM375 394h4v1h-4zM378 400h3v1h-3zM378 393h4v1h-4zM381 400h2v1h-2zM394 442h4v1h-4zM393 437h3v1h-3zM392 437h2v1h-2zM392 444h3v1h-3zM409 451h2v1h-2zM411 445h2v1h-2zM409 445h3v1h-3zM415 446h4v1h-4zM429 296h2v1h-2zM426 297h3v1h-3zM426 297h2v1h-2zM425 290h3v1h-3zM443 257h4v1h-4zM443 251h3v1h-3zM443 257h2v1h-2zM448 257h2v1h-2zM458 248h3v1h-3zM457 242h2v1h-2zM461 247h3v1h-3zM457 249h3v1h-3zM477 401h4v1h-4zM476 399h3v1h-3zM473 394h2v1h-2zM479 399h2v1h-2zM490 436h4v1h-4zM493 442h2v1h-2zM496 444h3v1h-3zM495 437h2v1h-2zM506 453h4v1h-4zM511 453h4v1h-4zM513 453h4v1h-4zM513 446h2v1h-2zM527 290h2v1h-2zM524 296h3v1h-3zM523 298h3v1h-3zM529 298h4v1h-4zM540 250h2v1h-2zM541 251h4v1h-4zM545 250h2v1h-2zM540 251h2v1h-2zM562 241h3v1h-3zM561 247h3v1h-3zM556 247h4v1h-4zM561 249h4v1h-4zM577 394h2v1h-2zM580 393h2v1h-2zM574 401h3v1h-3zM574 399h4v1h-4zM592 443h3v1h-3zM593 437h4v1h-4zM594 444h3v1h-3zM592 437h4v1h-4zM614 451h4v1h-4zM613 446h2v1h-2zM610 452h4v1h-4zM606 446h4v1h-4zM631 291h2v1h-2zM626 296h4v1h-4zM624 297h4v1h-4zM631 297h2v1h-2zM647 251h2v1h-2zM642 251h2v1h-2zM647 258h4v1h-4zM643 256h2v1h-2zM657 247h4v1h-4zM658 247h4v1h-4zM666 241h4v1h-4zM666 242h2v1h-2zM673 400h3v1h-3zM675 400h4v1h-4zM676 394h3v1h-3zM681 393h4v1h-4zM698 437h4v1h-4zM694 442h3v1h-3zM696 444h3v1h-3zM690 442h3v1h-3zM714 453h4v1h-4zM712 446h4v1h-4zM716 453h4v1h-4zM716 446h2v1h-2zM730 290h2v1h-2zM729 298h4v1h-4zM725 297h3v1h-3zM731 290h2v1h-2zM741 256h3v1h-3zM744 258h4v1h-4zM742 258h3v1h-3zM740 256h3v1h-3zM760 241h4v1h-4zM761 247h3v1h-3zM762 249h2v1h-2zM756 242h3v1h-3zM781 394h4v1h-4zM776 394h2v1h-2zM774 399h2v1h-2zM778 401h4v1h-4zM793 443h2v1h-2zM791 436h2v1h-2zM790 442h4v1h-4zM797 436h3v1h-3zM816 451h4v1h-4zM815 452h4v1h-4zM816 452h2v1h-2zM811 451h3v1h-3zM825 297h4v1h-4zM831 297h2v1h-2zM825 297h3v1h-3zM829 291h2v1h-2zM847 256h4v1h-4zM848 257h2v1h-2zM840 256h4v1h-4zM842 257h3v1h-3zM860 248h4v1h-4zM857 248h2v1h-2zM863 247h2v1h-2zM859 249h2v1h-2zM873 394h2v1h-2zM877 401h2v1h-2zM880 394h4v1h-4zM880 399h2v1h-2zM893 443h3v1h-3zM895 444h3v1h-3zM890 444h3v1h-3zM892 442h4v1h-4zM912 445h2v1h-2zM910 451h2v1h-2zM911 446h4v1h-4zM907 453h2v1h-2zM926 298h4v1h-4zM929 297h4v1h-4zM923 291h3v1h-3zM926 298h3v1h-3zM946 250h2v1h-2zM946 258h4v1h-4zM941 257h3v1h-3zM942 256h3v1h-3zM956 247h2v1h-2zM965 247h3v1h-3zM964 249h3v1h-3zM965 249h3v1h-3zM981 393h2v1h-2zM977 399h4v1h-4zM981 394h3v1h-3zM981 401h3v1h-3zM992 444h4v1h-4zM991 436h2v1h-2zM991 444h2v1h-2zM997 444h3v1h-3zM1011 452h2v1h-2zM1010 453h3v1h-3zM1010 445h3v1h-3zM1009 452h4v1h-4z" fill="#000" fill-opacity="0.2" shape-rendering="crispEdges"/>
<path d="M20.5 343 C20.5 273 20.9 310 22.7 294M36.4 296 C36.7 270 37.3 262 39.3 254M70.5 245 C70.7 335 71.0 375 72.9 397M86.1 397 C86.7 413 87.9 426 88.9 438M120.5 449 C120.5 379 120.9 310 122.7 294M136.4 296 C136.7 270 137.3 262 139.3 254M170.5 245 C170.7 335 171.0 375 172.9 397M186.1 397 C186.7 413 187.9 426 188.9 438M220.5 449 C220.5 379 220.9 310 222.7 294M236.4 296 C236.7 270 237.3 262 239.3 254M270.5 245 C270.7 335 271.0 375 272.9 397M286.1 397 C286.7 413 287.9 426 288.9 438M320.5 449 C320.5 379 320.9 310 322.7 294M336.4 296 C336.7 270 337.3 262 339.3 254M370.5 245 C370.7 335 371.0 375 372.9 397M386.1 397 C386.7 413 387.9 426 388.9 438M420.5 449 C420.5 379 420.9 310 422.7 294M436.4 296 C436.7 270 437.3 262 439.3 254M470.5 245 C470.7 335 471.0 375 472.9 397M486.1 397 C486.7 413 487.9 426 488.9 438M520.5 449 C520.5 379 520.9 310 522.7 294M536.4 296 C536.7 270 537.3 262 539.3 254M570.5 245 C570.7 335 571.0 375 572.9 397M586.1 397 C586.7 413 587.9 426 588.9 438M620.5 449 C620.5 379 620.9 310 622.7 294M636.4 296 C636.7 270 637.3 262 639.3 254M670.5 245 C670.7 335 671.0 375 672.9 397M686.1 397 C686.7 413 687.9 426 688.9 438M720.5 449 C720.5 379 720.9 310 722.7 294M736.4 296 C736.7 270 737.3 262 739.3 254M770.5 245 C770.7 335 771.0 375 772.9 397M786.1 397 C786.7 413 787.9 426 788.9 438M820.5 449 C820.5 379 820.9 310 822.7 294M836.4 296 C836.7 270 837.3 262 839.3 254M870.5 245 C870.7 335 871.0 375 872.9 397M886.1 397 C886.7 413 887.9 426 888.9 438M920.5 449 C920.5 379 920.9 310 922.7 294M936.4 296 C936.7 270 937.3 262 939.3 254M970.5 245 C970.7 335 971.0 375 972.9 397M986.1 397 C986.7 413 987.9 426 988.9 438M1020.5 449 C1020.5 379 1020.9 310 1022.7 294" fill="none" stroke="#00cc00" stroke-width="1.25"/>
<path d="M21.5 342V312C21.5 304 21.8 298 23 294" fill="none" stroke="#008800" stroke-width="1.1"/>
<g shape-rendering="crispEdges" fill="#5896d4">
<rect x="20" y="16" width="1002" height="1"/>
<rect x="20" y="668" width="1002" height="1"/>
<rect x="20" y="16" width="1" height="653"/>
<rect x="1021" y="16" width="1" height="653"/>
<rect x="121" y="0" width="800" height="1"/>
<rect x="121" y="15" width="800" height="1"/>
<rect x="121" y="0" width="1" height="16"/>
<rect x="920" y="0" width="1" height="16"/>
</g>
<rect x="282" y="7" width="479" height="1" fill="#00a000" shape-rendering="crispEdges"/>
<path d="M21 30h1v1h-1zM21 43h1v1h-1zM21 56h1v1h-1zM21 69h1v1h-1zM21 95h1v1h-1zM21 108h1v1h-1zM21 121h1v1h-1zM21 134h1v1h-1zM21 160h1v1h-1zM21 173h1v1h-1zM21 186h1v1h-1zM21 199h1v1h-1zM21 225h1v1h-1zM21 238h1v1h-1zM21 251h1v1h-1zM21 264h1v1h-1zM21 290h1v1h-1zM21 303h1v1h-1zM21 316h1v1h-1zM21 329h1v1h-1zM21 342h1v1h-1zM21 355h1v1h-1zM21 368h1v1h-1zM21 381h1v1h-1zM21 394h1v1h-1zM21 420h1v1h-1zM21 433h1v1h-1zM21 446h1v1h-1zM21 459h1v1h-1zM21 485h1v1h-1zM21 498h1v1h-1zM21 511h1v1h-1zM21 524h1v1h-1zM21 550h1v1h-1zM21 563h1v1h-1zM21 576h1v1h-1zM21 589h1v1h-1zM21 615h1v1h-1zM21 628h1v1h-1zM21 641h1v1h-1zM21 654h1v1h-1zM22 82h1v1h-1zM22 147h1v1h-1zM22 212h1v1h-1zM22 277h1v1h-1zM22 407h1v1h-1zM22 472h1v1h-1zM22 537h1v1h-1zM22 602h1v1h-1zM23 30h1v1h-1zM23 43h1v1h-1zM23 56h1v1h-1zM23 69h1v1h-1zM23 95h1v1h-1zM23 108h1v1h-1zM23 121h1v1h-1zM23 134h1v1h-1zM23 160h1v1h-1zM23 173h1v1h-1zM23 186h1v1h-1zM23 199h1v1h-1zM23 225h1v1h-1zM23 238h1v1h-1zM23 251h1v1h-1zM23 264h1v1h-1zM23 290h1v1h-1zM23 303h1v1h-1zM23 316h1v1h-1zM23 329h1v1h-1zM23 342h1v1h-1zM23 355h1v1h-1zM23 368h1v1h-1zM23 381h1v1h-1zM23 394h1v1h-1zM23 420h1v1h-1zM23 433h1v1h-1zM23 446h1v1h-1zM23 459h1v1h-1zM23 485h1v1h-1zM23 498h1v1h-1zM23 511h1v1h-1zM23 524h1v1h-1zM23 550h1v1h-1zM23 563h1v1h-1zM23 576h1v1h-1zM23 589h1v1h-1zM23 615h1v1h-1zM23 628h1v1h-1zM23 641h1v1h-1zM23 654h1v1h-1zM24 82h1v1h-1zM24 147h1v1h-1zM24 212h1v1h-1zM24 277h1v1h-1zM24 407h1v1h-1zM24 472h1v1h-1zM24 537h1v1h-1zM24 602h1v1h-1zM25 342h1v1h-1zM26 82h1v1h-1zM26 147h1v1h-1zM26 212h1v1h-1zM26 277h1v1h-1zM26 407h1v1h-1zM26 472h1v1h-1zM26 537h1v1h-1zM26 602h1v1h-1zM27 342h1v1h-1zM29 342h1v1h-1zM31 342h1v1h-1zM33 342h1v1h-1zM35 342h1v1h-1zM37 342h1v1h-1zM39 342h1v1h-1zM41 17h1v1h-1zM41 19h1v1h-1zM41 82h1v1h-1zM41 147h1v1h-1zM41 212h1v1h-1zM41 277h1v1h-1zM41 339h1v1h-1zM41 342h1v1h-1zM41 345h1v1h-1zM41 407h1v1h-1zM41 472h1v1h-1zM41 537h1v1h-1zM41 602h1v1h-1zM41 665h1v1h-1zM41 667h1v1h-1zM43 342h1v1h-1zM45 342h1v1h-1zM47 342h1v1h-1zM49 342h1v1h-1zM51 342h1v1h-1zM53 342h1v1h-1zM55 342h1v1h-1zM57 342h1v1h-1zM59 342h1v1h-1zM61 17h1v1h-1zM61 19h1v1h-1zM61 82h1v1h-1zM61 147h1v1h-1zM61 212h1v1h-1zM61 277h1v1h-1zM61 339h1v1h-1zM61 342h1v1h-1zM61 345h1v1h-1zM61 407h1v1h-1zM61 472h1v1h-1zM61 537h1v1h-1zM61 602h1v1h-1zM61 665h1v1h-1zM61 667h1v1h-1zM63 342h1v1h-1zM65 342h1v1h-1zM67 342h1v1h-1zM69 342h1v1h-1zM71 342h1v1h-1zM73 342h1v1h-1zM75 342h1v1h-1zM77 342h1v1h-1zM79 342h1v1h-1zM81 17h1v1h-1zM81 19h1v1h-1zM81 82h1v1h-1zM81 147h1v1h-1zM81 212h1v1h-1zM81 277h1v1h-1zM81 339h1v1h-1zM81 342h1v1h-1zM81 345h1v1h-1zM81 407h1v1h-1zM81 472h1v1h-1zM81 537h1v1h-1zM81 602h1v1h-1zM81 665h1v1h-1zM81 667h1v1h-1zM83 342h1v1h-1zM85 342h1v1h-1zM87 342h1v1h-1zM89 342h1v1h-1zM91 342h1v1h-1zM93 342h1v1h-1zM95 342h1v1h-1zM97 342h1v1h-1zM99 342h1v1h-1zM101 17h1v1h-1zM101 19h1v1h-1zM101 82h1v1h-1zM101 147h1v1h-1zM101 212h1v1h-1zM101 277h1v1h-1zM101 339h1v1h-1zM101 342h1v1h-1zM101 345h1v1h-1zM101 407h1v1h-1zM101 472h1v1h-1zM101 537h1v1h-1zM101 602h1v1h-1zM101 665h1v1h-1zM101 667h1v1h-1zM103 342h1v1h-1zM105 342h1v1h-1zM107 342h1v1h-1zM109 342h1v1h-1zM111 342h1v1h-1zM113 342h1v1h-1zM115 342h1v1h-1zM117 342h1v1h-1zM119 342h1v1h-1zM121 18h1v1h-1zM121 20h1v1h-1zM121 22h1v1h-1zM121 30h1v1h-1zM121 43h1v1h-1zM121 56h1v1h-1zM121 69h1v1h-1zM121 82h1v1h-1zM121 95h1v1h-1zM121 108h1v1h-1zM121 121h1v1h-1zM121 134h1v1h-1zM121 147h1v1h-1zM121 160h1v1h-1zM121 173h1v1h-1zM121 186h1v1h-1zM121 199h1v1h-1zM121 212h1v1h-1zM121 225h1v1h-1zM121 238h1v1h-1zM121 251h1v1h-1zM121 264h1v1h-1zM121 277h1v1h-1zM121 290h1v1h-1zM121 303h1v1h-1zM121 316h1v1h-1zM121 329h1v1h-1zM121 339h1v1h-1zM121 342h1v1h-1zM121 345h1v1h-1zM121 355h1v1h-1zM121 368h1v1h-1zM121 381h1v1h-1zM121 394h1v1h-1zM121 407h1v1h-1zM121 420h1v1h-1zM121 433h1v1h-1zM121 446h1v1h-1zM121 459h1v1h-1zM121 472h1v1h-1zM121 485h1v1h-1zM121 498h1v1h-1zM121 511h1v1h-1zM121 524h1v1h-1zM121 537h1v1h-1zM121 550h1v1h-1zM121 563h1v1h-1zM121 576h1v1h-1zM121 589h1v1h-1zM121 602h1v1h-1zM121 615h1v1h-1zM121 628h1v1h-1zM121 641h1v1h-1zM121 654h1v1h-1zM121 662h1v1h-1zM121 664h1v1h-1zM121 666h1v1h-1zM123 342h1v1h-1zM125 342h1v1h-1zM127 342h1v1h-1zM129 342h1v1h-1zM131 342h1v1h-1zM133 342h1v1h-1zM135 342h1v1h-1zM137 342h1v1h-1zM139 342h1v1h-1zM141 17h1v1h-1zM141 19h1v1h-1zM141 82h1v1h-1zM141 147h1v1h-1zM141 212h1v1h-1zM141 277h1v1h-1zM141 339h1v1h-1zM141 342h1v1h-1zM141 345h1v1h-1zM141 407h1v1h-1zM141 472h1v1h-1zM141 537h1v1h-1zM141 602h1v1h-1zM141 665h1v1h-1zM141 667h1v1h-1zM143 342h1v1h-1zM145 342h1v1h-1zM147 342h1v1h-1zM149 342h1v1h-1zM151 342h1v1h-1zM153 342h1v1h-1zM155 342h1v1h-1zM157 342h1v1h-1zM159 342h1v1h-1zM161 17h1v1h-1zM161 19h1v1h-1zM161 82h1v1h-1zM161 147h1v1h-1zM161 212h1v1h-1zM161 277h1v1h-1zM161 339h1v1h-1zM161 342h1v1h-1zM161 345h1v1h-1zM161 407h1v1h-1zM161 472h1v1h-1zM161 537h1v1h-1zM161 602h1v1h-1zM161 665h1v1h-1zM161 667h1v1h-1zM163 342h1v1h-1zM165 342h1v1h-1zM167 342h1v1h-1zM169 342h1v1h-1zM171 342h1v1h-1zM173 342h1v1h-1zM175 342h1v1h-1zM177 342h1v1h-1zM179 342h1v1h-1zM181 17h1v1h-1zM181 19h1v1h-1zM181 82h1v1h-1zM181 147h1v1h-1zM181 212h1v1h-1zM181 277h1v1h-1zM181 339h1v1h-1zM181 342h1v1h-1zM181 345h1v1h-1zM181 407h1v1h-1zM181 472h1v1h-1zM181 537h1v1h-1zM181 602h1v1h-1zM181 665h1v1h-1zM181 667h1v1h-1zM183 342h1v1h-1zM185 342h1v1h-1zM187 342h1v1h-1zM189 342h1v1h-1zM191 342h1v1h-1zM193 342h1v1h-1zM195 342h1v1h-1zM197 342h1v1h-1zM199 342h1v1h-1zM201 17h1v1h-1zM201 19h1v1h-1zM201 82h1v1h-1zM201 147h1v1h-1zM201 212h1v1h-1zM201 277h1v1h-1zM201 339h1v1h-1zM201 342h1v1h-1zM201 345h1v1h-1zM201 407h1v1h-1zM201 472h1v1h-1zM201 537h1v1h-1zM201 602h1v1h-1zM201 665h1v1h-1zM201 667h1v1h-1zM203 342h1v1h-1zM205 342h1v1h-1zM207 342h1v1h-1zM209 342h1v1h-1zM211 342h1v1h-1zM213 342h1v1h-1zM215 342h1v1h-1zM217 342h1v1h-1zM219 342h1v1h-1zM221 18h1v1h-1zM221 20h1v1h-1zM221 22h1v1h-1zM221 30h1v1h-1zM221 43h1v1h-1zM221 56h1v1h-1zM221 69h1v1h-1zM221 82h1v1h-1zM221 95h1v1h-1zM221 108h1v1h-1zM221 121h1v1h-1zM221 134h1v1h-1zM221 147h1v1h-1zM221 160h1v1h-1zM221 173h1v1h-1zM221 186h1v1h-1zM221 199h1v1h-1zM221 212h1v1h-1zM221 225h1v1h-1zM221 238h1v1h-1zM221 251h1v1h-1zM221 264h1v1h-1zM221 277h1v1h-1zM221 290h1v1h-1zM221 303h1v1h-1zM221 316h1v1h-1zM221 329h1v1h-1zM221 339h1v1h-1zM221 342h1v1h-1zM221 345h1v1h-1zM221 355h1v1h-1zM221 368h1v1h-1zM221 381h1v1h-1zM221 394h1v1h-1zM221 407h1v1h-1zM221 420h1v1h-1zM221 433h1v1h-1zM221 446h1v1h-1zM221 459h1v1h-1zM221 472h1v1h-1zM221 485h1v1h-1zM221 498h1v1h-1zM221 511h1v1h-1zM221 524h1v1h-1zM221 537h1v1h-1zM221 550h1v1h-1zM221 563h1v1h-1zM221 576h1v1h-1zM221 589h1v1h-1zM221 602h1v1h-1zM221 615h1v1h-1zM221 628h1v1h-1zM221 641h1v1h-1zM221 654h1v1h-1zM221 662h1v1h-1zM221 664h1v1h-1zM221 666h1v1h-1zM223 342h1v1h-1zM225 342h1v1h-1zM227 342h1v1h-1zM229 342h1v1h-1zM231 342h1v1h-1zM233 342h1v1h-1zM235 342h1v1h-1zM237 342h1v1h-1zM239 342h1v1h-1zM241 17h1v1h-1zM241 19h1v1h-1zM241 82h1v1h-1zM241 147h1v1h-1zM241 212h1v1h-1zM241 277h1v1h-1zM241 339h1v1h-1zM241 342h1v1h-1zM241 345h1v1h-1zM241 407h1v1h-1zM241 472h1v1h-1zM241 537h1v1h-1zM241 602h1v1h-1zM241 665h1v1h-1zM241 667h1v1h-1zM243 342h1v1h-1zM245 342h1v1h-1zM247 342h1v1h-1zM249 342h1v1h-1zM251 342h1v1h-1zM253 342h1v1h-1zM255 342h1v1h-1zM257 342h1v1h-1zM259 342h1v1h-1zM261 17h1v1h-1zM261 19h1v1h-1zM261 82h1v1h-1zM261 147h1v1h-1zM261 212h1v1h-1zM261 277h1v1h-1zM261 339h1v1h-1zM261 342h1v1h-1zM261 345h1v1h-1zM261 407h1v1h-1zM261 472h1v1h-1zM261 537h1v1h-1zM261 602h1v1h-1zM261 665h1v1h-1zM261 667h1v1h-1zM263 342h1v1h-1zM265 342h1v1h-1zM267 342h1v1h-1zM269 342h1v1h-1zM271 342h1v1h-1zM273 342h1v1h-1zM275 342h1v1h-1zM277 342h1v1h-1zM279 342h1v1h-1zM281 17h1v1h-1zM281 19h1v1h-1zM281 82h1v1h-1zM281 147h1v1h-1zM281 212h1v1h-1zM281 277h1v1h-1zM281 339h1v1h-1zM281 342h1v1h-1zM281 345h1v1h-1zM281 407h1v1h-1zM281 472h1v1h-1zM281 537h1v1h-1zM281 602h1v1h-1zM281 665h1v1h-1zM281 667h1v1h-1zM283 342h1v1h-1zM285 342h1v1h-1zM287 342h1v1h-1zM289 342h1v1h-1zM291 342h1v1h-1zM293 342h1v1h-1zM295 342h1v1h-1zM297 342h1v1h-1zM299 342h1v1h-1zM301 17h1v1h-1zM301 19h1v1h-1zM301 82h1v1h-1zM301 147h1v1h-1zM301 212h1v1h-1zM301 277h1v1h-1zM301 339h1v1h-1zM301 342h1v1h-1zM301 345h1v1h-1zM301 407h1v1h-1zM301 472h1v1h-1zM301 537h1v1h-1zM301 602h1v1h-1zM301 665h1v1h-1zM301 667h1v1h-1zM303 342h1v1h-1zM305 342h1v1h-1zM307 342h1v1h-1zM309 342h1v1h-1zM311 342h1v1h-1zM313 342h1v1h-1zM315 342h1v1h-1zM317 342h1v1h-1zM319 342h1v1h-1zM321 18h1v1h-1zM321 20h1v1h-1zM321 22h1v1h-1zM321 30h1v1h-1zM321 43h1v1h-1zM321 56h1v1h-1zM321 69h1v1h-1zM321 82h1v1h-1zM321 95h1v1h-1zM321 108h1v1h-1zM321 121h1v1h-1zM321 134h1v1h-1zM321 147h1v1h-1zM321 160h1v1h-1zM321 173h1v1h-1zM321 186h1v1h-1zM321 199h1v1h-1zM321 212h1v1h-1zM321 225h1v1h-1zM321 238h1v1h-1zM321 251h1v1h-1zM321 264h1v1h-1zM321 277h1v1h-1zM321 290h1v1h-1zM321 303h1v1h-1zM321 316h1v1h-1zM321 329h1v1h-1zM321 339h1v1h-1zM321 342h1v1h-1zM321 345h1v1h-1zM321 355h1v1h-1zM321 368h1v1h-1zM321 381h1v1h-1zM321 394h1v1h-1zM321 407h1v1h-1zM321 420h1v1h-1zM321 433h1v1h-1zM321 446h1v1h-1zM321 459h1v1h-1zM321 472h1v1h-1zM321 485h1v1h-1zM321 498h1v1h-1zM321 511h1v1h-1zM321 524h1v1h-1zM321 537h1v1h-1zM321 550h1v1h-1zM321 563h1v1h-1zM321 576h1v1h-1zM321 589h1v1h-1zM321 602h1v1h-1zM321 615h1v1h-1zM321 628h1v1h-1zM321 641h1v1h-1zM321 654h1v1h-1zM321 662h1v1h-1zM321 664h1v1h-1zM321 666h1v1h-1zM323 342h1v1h-1zM325 342h1v1h-1zM327 342h1v1h-1zM329 342h1v1h-1zM331 342h1v1h-1zM333 342h1v1h-1zM335 342h1v1h-1zM337 342h1v1h-1zM339 342h1v1h-1zM341 17h1v1h-1zM341 19h1v1h-1zM341 82h1v1h-1zM341 147h1v1h-1zM341 212h1v1h-1zM341 277h1v1h-1zM341 339h1v1h-1zM341 342h1v1h-1zM341 345h1v1h-1zM341 407h1v1h-1zM341 472h1v1h-1zM341 537h1v1h-1zM341 602h1v1h-1zM341 665h1v1h-1zM341 667h1v1h-1zM343 342h1v1h-1zM345 342h1v1h-1zM347 342h1v1h-1zM349 342h1v1h-1zM351 342h1v1h-1zM353 342h1v1h-1zM355 342h1v1h-1zM357 342h1v1h-1zM359 342h1v1h-1zM361 17h1v1h-1zM361 19h1v1h-1zM361 82h1v1h-1zM361 147h1v1h-1zM361 212h1v1h-1zM361 277h1v1h-1zM361 339h1v1h-1zM361 342h1v1h-1zM361 345h1v1h-1zM361 407h1v1h-1zM361 472h1v1h-1zM361 537h1v1h-1zM361 602h1v1h-1zM361 665h1v1h-1zM361 667h1v1h-1zM363 342h1v1h-1zM365 342h1v1h-1zM367 342h1v1h-1zM369 342h1v1h-1zM371 342h1v1h-1zM373 342h1v1h-1zM375 342h1v1h-1zM377 342h1v1h-1zM379 342h1v1h-1zM381 17h1v1h-1zM381 19h1v1h-1zM381 82h1v1h-1zM381 147h1v1h-1zM381 212h1v1h-1zM381 277h1v1h-1zM381 339h1v1h-1zM381 342h1v1h-1zM381 345h1v1h-1zM381 407h1v1h-1zM381 472h1v1h-1zM381 537h1v1h-1zM381 602h1v1h-1zM381 665h1v1h-1zM381 667h1v1h-1zM383 342h1v1h-1zM385 342h1v1h-1zM387 342h1v1h-1zM389 342h1v1h-1zM391 342h1v1h-1zM393 342h1v1h-1zM395 342h1v1h-1zM397 342h1v1h-1zM399 342h1v1h-1zM401 17h1v1h-1zM401 19h1v1h-1zM401 82h1v1h-1zM401 147h1v1h-1zM401 212h1v1h-1zM401 277h1v1h-1zM401 339h1v1h-1zM401 342h1v1h-1zM401 345h1v1h-1zM401 407h1v1h-1zM401 472h1v1h-1zM401 537h1v1h-1zM401 602h1v1h-1zM401 665h1v1h-1zM401 667h1v1h-1zM403 342h1v1h-1zM405 342h1v1h-1zM407 342h1v1h-1zM409 342h1v1h-1zM411 342h1v1h-1zM413 342h1v1h-1zM415 342h1v1h-1zM417 342h1v1h-1zM419 342h1v1h-1zM421 18h1v1h-1zM421 20h1v1h-1zM421 22h1v1h-1zM421 30h1v1h-1zM421 43h1v1h-1zM421 56h1v1h-1zM421 69h1v1h-1zM421 82h1v1h-1zM421 95h1v1h-1zM421 108h1v1h-1zM421 121h1v1h-1zM421 134h1v1h-1zM421 147h1v1h-1zM421 160h1v1h-1zM421 173h1v1h-1zM421 186h1v1h-1zM421 199h1v1h-1zM421 212h1v1h-1zM421 225h1v1h-1zM421 238h1v1h-1zM421 251h1v1h-1zM421 264h1v1h-1zM421 277h1v1h-1zM421 290h1v1h-1zM421 303h1v1h-1zM421 316h1v1h-1zM421 329h1v1h-1zM421 339h1v1h-1zM421 342h1v1h-1zM421 345h1v1h-1zM421 355h1v1h-1zM421 368h1v1h-1zM421 381h1v1h-1zM421 394h1v1h-1zM421 407h1v1h-1zM421 420h1v1h-1zM421 433h1v1h-1zM421 446h1v1h-1zM421 459h1v1h-1zM421 472h1v1h-1zM421 485h1v1h-1zM421 498h1v1h-1zM421 511h1v1h-1zM421 524h1v1h-1zM421 537h1v1h-1zM421 550h1v1h-1zM421 563h1v1h-1zM421 576h1v1h-1zM421 589h1v1h-1zM421 602h1v1h-1zM421 615h1v1h-1zM421 628h1v1h-1zM421 641h1v1h-1zM421 654h1v1h-1zM421 662h1v1h-1zM421 664h1v1h-1zM421 666h1v1h-1zM423 342h1v1h-1zM425 342h1v1h-1zM427 342h1v1h-1zM429 342h1v1h-1zM431 342h1v1h-1zM433 342h1v1h-1zM435 342h1v1h-1zM437 342h1v1h-1zM439 342h1v1h-1zM441 17h1v1h-1zM441 19h1v1h-1zM441 82h1v1h-1zM441 147h1v1h-1zM441 212h1v1h-1zM441 277h1v1h-1zM441 339h1v1h-1zM441 342h1v1h-1zM441 345h1v1h-1zM441 407h1v1h-1zM441 472h1v1h-1zM441 537h1v1h-1zM441 602h1v1h-1zM441 665h1v1h-1zM441 667h1v1h-1zM443 342h1v1h-1zM445 342h1v1h-1zM447 342h1v1h-1zM449 342h1v1h-1zM451 342h1v1h-1zM453 342h1v1h-1zM455 342h1v1h-1zM457 342h1v1h-1zM459 342h1v1h-1zM461 17h1v1h-1zM461 19h1v1h-1zM461 82h1v1h-1zM461 147h1v1h-1zM461 212h1v1h-1zM461 277h1v1h-1zM461 339h1v1h-1zM461 342h1v1h-1zM461 345h1v1h-1zM461 407h1v1h-1zM461 472h1v1h-1zM461 537h1v1h-1zM461 602h1v1h-1zM461 665h1v1h-1zM461 667h1v1h-1zM463 342h1v1h-1zM465 342h1v1h-1zM467 342h1v1h-1zM469 342h1v1h-1zM471 342h1v1h-1zM473 342h1v1h-1zM475 342h1v1h-1zM477 342h1v1h-1zM479 342h1v1h-1zM481 17h1v1h-1zM481 19h1v1h-1zM481 82h1v1h-1zM481 147h1v1h-1zM481 212h1v1h-1zM481 277h1v1h-1zM481 339h1v1h-1zM481 342h1v1h-1zM481 345h1v1h-1zM481 407h1v1h-1zM481 472h1v1h-1zM481 537h1v1h-1zM481 602h1v1h-1zM481 665h1v1h-1zM481 667h1v1h-1zM483 342h1v1h-1zM485 342h1v1h-1zM487 342h1v1h-1zM489 342h1v1h-1zM491 342h1v1h-1zM493 342h1v1h-1zM495 342h1v1h-1zM497 342h1v1h-1zM499 342h1v1h-1zM501 17h1v1h-1zM501 19h1v1h-1zM501 82h1v1h-1zM501 147h1v1h-1zM501 212h1v1h-1zM501 277h1v1h-1zM501 339h1v1h-1zM501 342h1v1h-1zM501 345h1v1h-1zM501 407h1v1h-1zM501 472h1v1h-1zM501 537h1v1h-1zM501 602h1v1h-1zM501 665h1v1h-1zM501 667h1v1h-1zM503 342h1v1h-1zM505 342h1v1h-1zM507 342h1v1h-1zM509 342h1v1h-1zM511 342h1v1h-1zM513 342h1v1h-1zM515 342h1v1h-1zM517 342h1v1h-1zM518 30h1v1h-1zM518 43h1v1h-1zM518 56h1v1h-1zM518 69h1v1h-1zM518 82h1v1h-1zM518 95h1v1h-1zM518 108h1v1h-1zM518 121h1v1h-1zM518 134h1v1h-1zM518 147h1v1h-1zM518 160h1v1h-1zM518 173h1v1h-1zM518 186h1v1h-1zM518 199h1v1h-1zM518 212h1v1h-1zM518 225h1v1h-1zM518 238h1v1h-1zM518 251h1v1h-1zM518 264h1v1h-1zM518 277h1v1h-1zM518 290h1v1h-1zM518 303h1v1h-1zM518 316h1v1h-1zM518 329h1v1h-1zM518 355h1v1h-1zM518 368h1v1h-1zM518 381h1v1h-1zM518 394h1v1h-1zM518 407h1v1h-1zM518 420h1v1h-1zM518 433h1v1h-1zM518 446h1v1h-1zM518 459h1v1h-1zM518 472h1v1h-1zM518 485h1v1h-1zM518 498h1v1h-1zM518 511h1v1h-1zM518 524h1v1h-1zM518 537h1v1h-1zM518 550h1v1h-1zM518 563h1v1h-1zM518 576h1v1h-1zM518 589h1v1h-1zM518 602h1v1h-1zM518 615h1v1h-1zM518 628h1v1h-1zM518 641h1v1h-1zM518 654h1v1h-1zM519 342h1v1h-1zM521 18h1v1h-1zM521 20h1v1h-1zM521 22h1v1h-1zM521 24h1v1h-1zM521 26h1v1h-1zM521 28h1v1h-1zM521 30h1v1h-1zM521 32h1v1h-1zM521 34h1v1h-1zM521 36h1v1h-1zM521 38h1v1h-1zM521 40h1v1h-1zM521 43h1v1h-1zM521 46h1v1h-1zM521 48h1v1h-1zM521 50h1v1h-1zM521 52h1v1h-1zM521 54h1v1h-1zM521 56h1v1h-1zM521 58h1v1h-1zM521 60h1v1h-1zM521 62h1v1h-1zM521 64h1v1h-1zM521 66h1v1h-1zM521 69h1v1h-1zM521 72h1v1h-1zM521 74h1v1h-1zM521 76h1v1h-1zM521 78h1v1h-1zM521 80h1v1h-1zM521 82h1v1h-1zM521 84h1v1h-1zM521 86h1v1h-1zM521 88h1v1h-1zM521 90h1v1h-1zM521 92h1v1h-1zM521 95h1v1h-1zM521 98h1v1h-1zM521 100h1v1h-1zM521 102h1v1h-1zM521 104h1v1h-1zM521 106h1v1h-1zM521 108h1v1h-1zM521 110h1v1h-1zM521 112h1v1h-1zM521 114h1v1h-1zM521 116h1v1h-1zM521 118h1v1h-1zM521 121h1v1h-1zM521 124h1v1h-1zM521 126h1v1h-1zM521 128h1v1h-1zM521 130h1v1h-1zM521 132h1v1h-1zM521 134h1v1h-1zM521 136h1v1h-1zM521 138h1v1h-1zM521 140h1v1h-1zM521 142h1v1h-1zM521 144h1v1h-1zM521 147h1v1h-1zM521 150h1v1h-1zM521 152h1v1h-1zM521 154h1v1h-1zM521 156h1v1h-1zM521 158h1v1h-1zM521 160h1v1h-1zM521 162h1v1h-1zM521 164h1v1h-1zM521 166h1v1h-1zM521 168h1v1h-1zM521 170h1v1h-1zM521 173h1v1h-1zM521 176h1v1h-1zM521 178h1v1h-1zM521 180h1v1h-1zM521 182h1v1h-1zM521 184h1v1h-1zM521 186h1v1h-1zM521 188h1v1h-1zM521 190h1v1h-1zM521 192h1v1h-1zM521 194h1v1h-1zM521 196h1v1h-1zM521 199h1v1h-1zM521 202h1v1h-1zM521 204h1v1h-1zM521 206h1v1h-1zM521 208h1v1h-1zM521 210h1v1h-1zM521 212h1v1h-1zM521 214h1v1h-1zM521 216h1v1h-1zM521 218h1v1h-1zM521 220h1v1h-1zM521 222h1v1h-1zM521 225h1v1h-1zM521 228h1v1h-1zM521 230h1v1h-1zM521 232h1v1h-1zM521 234h1v1h-1zM521 236h1v1h-1zM521 238h1v1h-1zM521 240h1v1h-1zM521 242h1v1h-1zM521 244h1v1h-1zM521 246h1v1h-1zM521 248h1v1h-1zM521 251h1v1h-1zM521 254h1v1h-1zM521 256h1v1h-1zM521 258h1v1h-1zM521 260h1v1h-1zM521 262h1v1h-1zM521 264h1v1h-1zM521 266h1v1h-1zM521 268h1v1h-1zM521 270h1v1h-1zM521 272h1v1h-1zM521 274h1v1h-1zM521 277h1v1h-1zM521 280h1v1h-1zM521 282h1v1h-1zM521 284h1v1h-1zM521 286h1v1h-1zM521 288h1v1h-1zM521 290h1v1h-1zM521 292h1v1h-1zM521 294h1v1h-1zM521 296h1v1h-1zM521 298h1v1h-1zM521 300h1v1h-1zM521 303h1v1h-1zM521 306h1v1h-1zM521 308h1v1h-1zM521 310h1v1h-1zM521 312h1v1h-1zM521 314h1v1h-1zM521 316h1v1h-1zM521 318h1v1h-1zM521 320h1v1h-1zM521 322h1v1h-1zM521 324h1v1h-1zM521 326h1v1h-1zM521 329h1v1h-1zM521 332h1v1h-1zM521 334h1v1h-1zM521 336h1v1h-1zM521 338h1v1h-1zM521 340h1v1h-1zM521 342h1v1h-1zM521 344h1v1h-1zM521 346h1v1h-1zM521 348h1v1h-1zM521 350h1v1h-1zM521 352h1v1h-1zM521 355h1v1h-1zM521 358h1v1h-1zM521 360h1v1h-1zM521 362h1v1h-1zM521 364h1v1h-1zM521 366h1v1h-1zM521 368h1v1h-1zM521 370h1v1h-1zM521 372h1v1h-1zM521 374h1v1h-1zM521 376h1v1h-1zM521 378h1v1h-1zM521 381h1v1h-1zM521 384h1v1h-1zM521 386h1v1h-1zM521 388h1v1h-1zM521 390h1v1h-1zM521 392h1v1h-1zM521 394h1v1h-1zM521 396h1v1h-1zM521 398h1v1h-1zM521 400h1v1h-1zM521 402h1v1h-1zM521 404h1v1h-1zM521 407h1v1h-1zM521 410h1v1h-1zM521 412h1v1h-1zM521 414h1v1h-1zM521 416h1v1h-1zM521 418h1v1h-1zM521 420h1v1h-1zM521 422h1v1h-1zM521 424h1v1h-1zM521 426h1v1h-1zM521 428h1v1h-1zM521 430h1v1h-1zM521 433h1v1h-1zM521 436h1v1h-1zM521 438h1v1h-1zM521 440h1v1h-1zM521 442h1v1h-1zM521 444h1v1h-1zM521 446h1v1h-1zM521 448h1v1h-1zM521 450h1v1h-1zM521 452h1v1h-1zM521 454h1v1h-1zM521 456h1v1h-1zM521 459h1v1h-1zM521 462h1v1h-1zM521 464h1v1h-1zM521 466h1v1h-1zM521 468h1v1h-1zM521 470h1v1h-1zM521 472h1v1h-1zM521 474h1v1h-1zM521 476h1v1h-1zM521 478h1v1h-1zM521 480h1v1h-1zM521 482h1v1h-1zM521 485h1v1h-1zM521 488h1v1h-1zM521 490h1v1h-1zM521 492h1v1h-1zM521 494h1v1h-1zM521 496h1v1h-1zM521 498h1v1h-1zM521 500h1v1h-1zM521 502h1v1h-1zM521 504h1v1h-1zM521 506h1v1h-1zM521 508h1v1h-1zM521 511h1v1h-1zM521 514h1v1h-1zM521 516h1v1h-1zM521 518h1v1h-1zM521 520h1v1h-1zM521 522h1v1h-1zM521 524h1v1h-1zM521 526h1v1h-1zM521 528h1v1h-1zM521 530h1v1h-1zM521 532h1v1h-1zM521 534h1v1h-1zM521 537h1v1h-1zM521 540h1v1h-1zM521 542h1v1h-1zM521 544h1v1h-1zM521 546h1v1h-1zM521 548h1v1h-1zM521 550h1v1h-1zM521 552h1v1h-1zM521 554h1v1h-1zM521 556h1v1h-1zM521 558h1v1h-1zM521 560h1v1h-1zM521 563h1v1h-1zM521 566h1v1h-1zM521 568h1v1h-1zM521 570h1v1h-1zM521 572h1v1h-1zM521 574h1v1h-1zM521 576h1v1h-1zM521 578h1v1h-1zM521 580h1v1h-1zM521 582h1v1h-1zM521 584h1v1h-1zM521 586h1v1h-1zM521 589h1v1h-1zM521 592h1v1h-1zM521 594h1v1h-1zM521 596h1v1h-1zM521 598h1v1h-1zM521 600h1v1h-1zM521 602h1v1h-1zM521 604h1v1h-1zM521 606h1v1h-1zM521 608h1v1h-1zM521 610h1v1h-1zM521 612h1v1h-1zM521 615h1v1h-1zM521 618h1v1h-1zM521 620h1v1h-1zM521 622h1v1h-1zM521 624h1v1h-1zM521 626h1v1h-1zM521 628h1v1h-1zM521 630h1v1h-1zM521 632h1v1h-1zM521 634h1v1h-1zM521 636h1v1h-1zM521 638h1v1h-1zM521 641h1v1h-1zM521 644h1v1h-1zM521 646h1v1h-1zM521 648h1v1h-1zM521 650h1v1h-1zM521 652h1v1h-1zM521 654h1v1h-1zM521 656h1v1h-1zM521 658h1v1h-1zM521 660h1v1h-1zM521 662h1v1h-1zM521 664h1v1h-1zM521 666h1v1h-1zM523 342h1v1h-1zM524 30h1v1h-1zM524 43h1v1h-1zM524 56h1v1h-1zM524 69h1v1h-1zM524 82h1v1h-1zM524 95h1v1h-1zM524 108h1v1h-1zM524 121h1v1h-1zM524 134h1v1h-1zM524 147h1v1h-1zM524 160h1v1h-1zM524 173h1v1h-1zM524 186h1v1h-1zM524 199h1v1h-1zM524 212h1v1h-1zM524 225h1v1h-1zM524 238h1v1h-1zM524 251h1v1h-1zM524 264h1v1h-1zM524 277h1v1h-1zM524 290h1v1h-1zM524 303h1v1h-1zM524 316h1v1h-1zM524 329h1v1h-1zM524 355h1v1h-1zM524 368h1v1h-1zM524 381h1v1h-1zM524 394h1v1h-1zM524 407h1v1h-1zM524 420h1v1h-1zM524 433h1v1h-1zM524 446h1v1h-1zM524 459h1v1h-1zM524 472h1v1h-1zM524 485h1v1h-1zM524 498h1v1h-1zM524 511h1v1h-1zM524 524h1v1h-1zM524 537h1v1h-1zM524 550h1v1h-1zM524 563h1v1h-1zM524 576h1v1h-1zM524 589h1v1h-1zM524 602h1v1h-1zM524 615h1v1h-1zM524 628h1v1h-1zM524 641h1v1h-1zM524 654h1v1h-1zM525 342h1v1h-1zM527 342h1v1h-1zM529 342h1v1h-1zM531 342h1v1h-1zM533 342h1v1h-1zM535 342h1v1h-1zM537 342h1v1h-1zM539 342h1v1h-1zM541 17h1v1h-1zM541 19h1v1h-1zM541 82h1v1h-1zM541 147h1v1h-1zM541 212h1v1h-1zM541 277h1v1h-1zM541 339h1v1h-1zM541 342h1v1h-1zM541 345h1v1h-1zM541 407h1v1h-1zM541 472h1v1h-1zM541 537h1v1h-1zM541 602h1v1h-1zM541 665h1v1h-1zM541 667h1v1h-1zM543 342h1v1h-1zM545 342h1v1h-1zM547 342h1v1h-1zM549 342h1v1h-1zM551 342h1v1h-1zM553 342h1v1h-1zM555 342h1v1h-1zM557 342h1v1h-1zM559 342h1v1h-1zM561 17h1v1h-1zM561 19h1v1h-1zM561 82h1v1h-1zM561 147h1v1h-1zM561 212h1v1h-1zM561 277h1v1h-1zM561 339h1v1h-1zM561 342h1v1h-1zM561 345h1v1h-1zM561 407h1v1h-1zM561 472h1v1h-1zM561 537h1v1h-1zM561 602h1v1h-1zM561 665h1v1h-1zM561 667h1v1h-1zM563 342h1v1h-1zM565 342h1v1h-1zM567 342h1v1h-1zM569 342h1v1h-1zM571 342h1v1h-1zM573 342h1v1h-1zM575 342h1v1h-1zM577 342h1v1h-1zM579 342h1v1h-1zM581 17h1v1h-1zM581 19h1v1h-1zM581 82h1v1h-1zM581 147h1v1h-1zM581 212h1v1h-1zM581 277h1v1h-1zM581 339h1v1h-1zM581 342h1v1h-1zM581 345h1v1h-1zM581 407h1v1h-1zM581 472h1v1h-1zM581 537h1v1h-1zM581 602h1v1h-1zM581 665h1v1h-1zM581 667h1v1h-1zM583 342h1v1h-1zM585 342h1v1h-1zM587 342h1v1h-1zM589 342h1v1h-1zM591 342h1v1h-1zM593 342h1v1h-1zM595 342h1v1h-1zM597 342h1v1h-1zM599 342h1v1h-1zM601 17h1v1h-1zM601 19h1v1h-1zM601 82h1v1h-1zM601 147h1v1h-1zM601 212h1v1h-1zM601 277h1v1h-1zM601 339h1v1h-1zM601 342h1v1h-1zM601 345h1v1h-1zM601 407h1v1h-1zM601 472h1v1h-1zM601 537h1v1h-1zM601 602h1v1h-1zM601 665h1v1h-1zM601 667h1v1h-1zM603 342h1v1h-1zM605 342h1v1h-1zM607 342h1v1h-1zM609 342h1v1h-1zM611 342h1v1h-1zM613 342h1v1h-1zM615 342h1v1h-1zM617 342h1v1h-1zM619 342h1v1h-1zM621 18h1v1h-1zM621 20h1v1h-1zM621 22h1v1h-1zM621 30h1v1h-1zM621 43h1v1h-1zM621 56h1v1h-1zM621 69h1v1h-1zM621 82h1v1h-1zM621 95h1v1h-1zM621 108h1v1h-1zM621 121h1v1h-1zM621 134h1v1h-1zM621 147h1v1h-1zM621 160h1v1h-1zM621 173h1v1h-1zM621 186h1v1h-1zM621 199h1v1h-1zM621 212h1v1h-1zM621 225h1v1h-1zM621 238h1v1h-1zM621 251h1v1h-1zM621 264h1v1h-1zM621 277h1v1h-1zM621 290h1v1h-1zM621 303h1v1h-1zM621 316h1v1h-1zM621 329h1v1h-1zM621 339h1v1h-1zM621 342h1v1h-1zM621 345h1v1h-1zM621 355h1v1h-1zM621 368h1v1h-1zM621 381h1v1h-1zM621 394h1v1h-1zM621 407h1v1h-1zM621 420h1v1h-1zM621 433h1v1h-1zM621 446h1v1h-1zM621 459h1v1h-1zM621 472h1v1h-1zM621 485h1v1h-1zM621 498h1v1h-1zM621 511h1v1h-1zM621 524h1v1h-1zM621 537h1v1h-1zM621 550h1v1h-1zM621 563h1v1h-1zM621 576h1v1h-1zM621 589h1v1h-1zM621 602h1v1h-1zM621 615h1v1h-1zM621 628h1v1h-1zM621 641h1v1h-1zM621 654h1v1h-1zM621 662h1v1h-1zM621 664h1v1h-1zM621 666h1v1h-1zM623 342h1v1h-1zM625 342h1v1h-1zM627 342h1v1h-1zM629 342h1v1h-1zM631 342h1v1h-1zM633 342h1v1h-1zM635 342h1v1h-1zM637 342h1v1h-1zM639 342h1v1h-1zM641 17h1v1h-1zM641 19h1v1h-1zM641 82h1v1h-1zM641 147h1v1h-1zM641 212h1v1h-1zM641 277h1v1h-1zM641 339h1v1h-1zM641 342h1v1h-1zM641 345h1v1h-1zM641 407h1v1h-1zM641 472h1v1h-1zM641 537h1v1h-1zM641 602h1v1h-1zM641 665h1v1h-1zM641 667h1v1h-1zM643 342h1v1h-1zM645 342h1v1h-1zM647 342h1v1h-1zM649 342h1v1h-1zM651 342h1v1h-1zM653 342h1v1h-1zM655 342h1v1h-1zM657 342h1v1h-1zM659 342h1v1h-1zM661 17h1v1h-1zM661 19h1v1h-1zM661 82h1v1h-1zM661 147h1v1h-1zM661 212h1v1h-1zM661 277h1v1h-1zM661 339h1v1h-1zM661 342h1v1h-1zM661 345h1v1h-1zM661 407h1v1h-1zM661 472h1v1h-1zM661 537h1v1h-1zM661 602h1v1h-1zM661 665h1v1h-1zM661 667h1v1h-1zM663 342h1v1h-1zM665 342h1v1h-1zM667 342h1v1h-1zM669 342h1v1h-1zM671 342h1v1h-1zM673 342h1v1h-1zM675 342h1v1h-1zM677 342h1v1h-1zM679 342h1v1h-1zM681 17h1v1h-1zM681 19h1v1h-1zM681 82h1v1h-1zM681 147h1v1h-1zM681 212h1v1h-1zM681 277h1v1h-1zM681 339h1v1h-1zM681 342h1v1h-1zM681 345h1v1h-1zM681 407h1v1h-1zM681 472h1v1h-1zM681 537h1v1h-1zM681 602h1v1h-1zM681 665h1v1h-1zM681 667h1v1h-1zM683 342h1v1h-1zM685 342h1v1h-1zM687 342h1v1h-1zM689 342h1v1h-1zM691 342h1v1h-1zM693 342h1v1h-1zM695 342h1v1h-1zM697 342h1v1h-1zM699 342h1v1h-1zM701 17h1v1h-1zM701 19h1v1h-1zM701 82h1v1h-1zM701 147h1v1h-1zM701 212h1v1h-1zM701 277h1v1h-1zM701 339h1v1h-1zM701 342h1v1h-1zM701 345h1v1h-1zM701 407h1v1h-1zM701 472h1v1h-1zM701 537h1v1h-1zM701 602h1v1h-1zM701 665h1v1h-1zM701 667h1v1h-1zM703 342h1v1h-1zM705 342h1v1h-1zM707 342h1v1h-1zM709 342h1v1h-1zM711 342h1v1h-1zM713 342h1v1h-1zM715 342h1v1h-1zM717 342h1v1h-1zM719 342h1v1h-1zM721 18h1v1h-1zM721 20h1v1h-1zM721 22h1v1h-1zM721 30h1v1h-1zM721 43h1v1h-1zM721 56h1v1h-1zM721 69h1v1h-1zM721 82h1v1h-1zM721 95h1v1h-1zM721 108h1v1h-1zM721 121h1v1h-1zM721 134h1v1h-1zM721 147h1v1h-1zM721 160h1v1h-1zM721 173h1v1h-1zM721 186h1v1h-1zM721 199h1v1h-1zM721 212h1v1h-1zM721 225h1v1h-1zM721 238h1v1h-1zM721 251h1v1h-1zM721 264h1v1h-1zM721 277h1v1h-1zM721 290h1v1h-1zM721 303h1v1h-1zM721 316h1v1h-1zM721 329h1v1h-1zM721 339h1v1h-1zM721 342h1v1h-1zM721 345h1v1h-1zM721 355h1v1h-1zM721 368h1v1h-1zM721 381h1v1h-1zM721 394h1v1h-1zM721 407h1v1h-1zM721 420h1v1h-1zM721 433h1v1h-1zM721 446h1v1h-1zM721 459h1v1h-1zM721 472h1v1h-1zM721 485h1v1h-1zM721 498h1v1h-1zM721 511h1v1h-1zM721 524h1v1h-1zM721 537h1v1h-1zM721 550h1v1h-1zM721 563h1v1h-1zM721 576h1v1h-1zM721 589h1v1h-1zM721 602h1v1h-1zM721 615h1v1h-1zM721 628h1v1h-1zM721 641h1v1h-1zM721 654h1v1h-1zM721 662h1v1h-1zM721 664h1v1h-1zM721 666h1v1h-1zM723 342h1v1h-1zM725 342h1v1h-1zM727 342h1v1h-1zM729 342h1v1h-1zM731 342h1v1h-1zM733 342h1v1h-1zM735 342h1v1h-1zM737 342h1v1h-1zM739 342h1v1h-1zM741 17h1v1h-1zM741 19h1v1h-1zM741 82h1v1h-1zM741 147h1v1h-1zM741 212h1v1h-1zM741 277h1v1h-1zM741 339h1v1h-1zM741 342h1v1h-1zM741 345h1v1h-1zM741 407h1v1h-1zM741 472h1v1h-1zM741 537h1v1h-1zM741 602h1v1h-1zM741 665h1v1h-1zM741 667h1v1h-1zM743 342h1v1h-1zM745 342h1v1h-1zM747 342h1v1h-1zM749 342h1v1h-1zM751 342h1v1h-1zM753 342h1v1h-1zM755 342h1v1h-1zM757 342h1v1h-1zM759 342h1v1h-1zM761 17h1v1h-1zM761 19h1v1h-1zM761 82h1v1h-1zM761 147h1v1h-1zM761 212h1v1h-1zM761 277h1v1h-1zM761 339h1v1h-1zM761 342h1v1h-1zM761 345h1v1h-1zM761 407h1v1h-1zM761 472h1v1h-1zM761 537h1v1h-1zM761 602h1v1h-1zM761 665h1v1h-1zM761 667h1v1h-1zM763 342h1v1h-1zM765 342h1v1h-1zM767 342h1v1h-1zM769 342h1v1h-1zM771 342h1v1h-1zM773 342h1v1h-1zM775 342h1v1h-1zM777 342h1v1h-1zM779 342h1v1h-1zM781 17h1v1h-1zM781 19h1v1h-1zM781 82h1v1h-1zM781 147h1v1h-1zM781 212h1v1h-1zM781 277h1v1h-1zM781 339h1v1h-1zM781 342h1v1h-1zM781 345h1v1h-1zM781 407h1v1h-1zM781 472h1v1h-1zM781 537h1v1h-1zM781 602h1v1h-1zM781 665h1v1h-1zM781 667h1v1h-1zM783 342h1v1h-1zM785 342h1v1h-1zM787 342h1v1h-1zM789 342h1v1h-1zM791 342h1v1h-1zM793 342h1v1h-1zM795 342h1v1h-1zM797 342h1v1h-1zM799 342h1v1h-1zM801 17h1v1h-1zM801 19h1v1h-1zM801 82h1v1h-1zM801 147h1v1h-1zM801 212h1v1h-1zM801 277h1v1h-1zM801 339h1v1h-1zM801 342h1v1h-1zM801 345h1v1h-1zM801 407h1v1h-1zM801 472h1v1h-1zM801 537h1v1h-1zM801 602h1v1h-1zM801 665h1v1h-1zM801 667h1v1h-1zM803 342h1v1h-1zM805 342h1v1h-1zM807 342h1v1h-1zM809 342h1v1h-1zM811 342h1v1h-1zM813 342h1v1h-1zM815 342h1v1h-1zM817 342h1v1h-1zM819 342h1v1h-1zM821 18h1v1h-1zM821 20h1v1h-1zM821 22h1v1h-1zM821 30h1v1h-1zM821 43h1v1h-1zM821 56h1v1h-1zM821 69h1v1h-1zM821 82h1v1h-1zM821 95h1v1h-1zM821 108h1v1h-1zM821 121h1v1h-1zM821 134h1v1h-1zM821 147h1v1h-1zM821 160h1v1h-1zM821 173h1v1h-1zM821 186h1v1h-1zM821 199h1v1h-1zM821 212h1v1h-1zM821 225h1v1h-1zM821 238h1v1h-1zM821 251h1v1h-1zM821 264h1v1h-1zM821 277h1v1h-1zM821 290h1v1h-1zM821 303h1v1h-1zM821 316h1v1h-1zM821 329h1v1h-1zM821 339h1v1h-1zM821 342h1v1h-1zM821 345h1v1h-1zM821 355h1v1h-1zM821 368h1v1h-1zM821 381h1v1h-1zM821 394h1v1h-1zM821 407h1v1h-1zM821 420h1v1h-1zM821 433h1v1h-1zM821 446h1v1h-1zM821 459h1v1h-1zM821 472h1v1h-1zM821 485h1v1h-1zM821 498h1v1h-1zM821 511h1v1h-1zM821 524h1v1h-1zM821 537h1v1h-1zM821 550h1v1h-1zM821 563h1v1h-1zM821 576h1v1h-1zM821 589h1v1h-1zM821 602h1v1h-1zM821 615h1v1h-1zM821 628h1v1h-1zM821 641h1v1h-1zM821 654h1v1h-1zM821 662h1v1h-1zM821 664h1v1h-1zM821 666h1v1h-1zM823 342h1v1h-1zM825 342h1v1h-1zM827 342h1v1h-1zM829 342h1v1h-1zM831 342h1v1h-1zM833 342h1v1h-1zM835 342h1v1h-1zM837 342h1v1h-1zM839 342h1v1h-1zM841 17h1v1h-1zM841 19h1v1h-1zM841 82h1v1h-1zM841 147h1v1h-1zM841 212h1v1h-1zM841 277h1v1h-1zM841 339h1v1h-1zM841 342h1v1h-1zM841 345h1v1h-1zM841 407h1v1h-1zM841 472h1v1h-1zM841 537h1v1h-1zM841 602h1v1h-1zM841 665h1v1h-1zM841 667h1v1h-1zM843 342h1v1h-1zM845 342h1v1h-1zM847 342h1v1h-1zM849 342h1v1h-1zM851 342h1v1h-1zM853 342h1v1h-1zM855 342h1v1h-1zM857 342h1v1h-1zM859 342h1v1h-1zM861 17h1v1h-1zM861 19h1v1h-1zM861 82h1v1h-1zM861 147h1v1h-1zM861 212h1v1h-1zM861 277h1v1h-1zM861 339h1v1h-1zM861 342h1v1h-1zM861 345h1v1h-1zM861 407h1v1h-1zM861 472h1v1h-1zM861 537h1v1h-1zM861 602h1v1h-1zM861 665h1v1h-1zM861 667h1v1h-1zM863 342h1v1h-1zM865 342h1v1h-1zM867 342h1v1h-1zM869 342h1v1h-1zM871 342h1v1h-1zM873 342h1v1h-1zM875 342h1v1h-1zM877 342h1v1h-1zM879 342h1v1h-1zM881 17h1v1h-1zM881 19h1v1h-1zM881 82h1v1h-1zM881 147h1v1h-1zM881 212h1v1h-1zM881 277h1v1h-1zM881 339h1v1h-1zM881 342h1v1h-1zM881 345h1v1h-1zM881 407h1v1h-1zM881 472h1v1h-1zM881 537h1v1h-1zM881 602h1v1h-1zM881 665h1v1h-1zM881 667h1v1h-1zM883 342h1v1h-1zM885 342h1v1h-1zM887 342h1v1h-1zM889 342h1v1h-1zM891 342h1v1h-1zM893 342h1v1h-1zM895 342h1v1h-1zM897 342h1v1h-1zM899 342h1v1h-1zM901 17h1v1h-1zM901 19h1v1h-1zM901 82h1v1h-1zM901 147h1v1h-1zM901 212h1v1h-1zM901 277h1v1h-1zM901 339h1v1h-1zM901 342h1v1h-1zM901 345h1v1h-1zM901 407h1v1h-1zM901 472h1v1h-1zM901 537h1v1h-1zM901 602h1v1h-1zM901 665h1v1h-1zM901 667h1v1h-1zM903 342h1v1h-1zM905 342h1v1h-1zM907 342h1v1h-1zM909 342h1v1h-1zM911 342h1v1h-1zM913 342h1v1h-1zM915 342h1v1h-1zM917 342h1v1h-1zM919 342h1v1h-1zM921 18h1v1h-1zM921 20h1v1h-1zM921 22h1v1h-1zM921 30h1v1h-1zM921 43h1v1h-1zM921 56h1v1h-1zM921 69h1v1h-1zM921 82h1v1h-1zM921 95h1v1h-1zM921 108h1v1h-1zM921 121h1v1h-1zM921 134h1v1h-1zM921 147h1v1h-1zM921 160h1v1h-1zM921 173h1v1h-1zM921 186h1v1h-1zM921 199h1v1h-1zM921 212h1v1h-1zM921 225h1v1h-1zM921 238h1v1h-1zM921 251h1v1h-1zM921 264h1v1h-1zM921 277h1v1h-1zM921 290h1v1h-1zM921 303h1v1h-1zM921 316h1v1h-1zM921 329h1v1h-1zM921 339h1v1h-1zM921 342h1v1h-1zM921 345h1v1h-1zM921 355h1v1h-1zM921 368h1v1h-1zM921 381h1v1h-1zM921 394h1v1h-1zM921 407h1v1h-1zM921 420h1v1h-1zM921 433h1v1h-1zM921 446h1v1h-1zM921 459h1v1h-1zM921 472h1v1h-1zM921 485h1v1h-1zM921 498h1v1h-1zM921 511h1v1h-1zM921 524h1v1h-1zM921 537h1v1h-1zM921 550h1v1h-1zM921 563h1v1h-1zM921 576h1v1h-1zM921 589h1v1h-1zM921 602h1v1h-1zM921 615h1v1h-1zM921 628h1v1h-1zM921 641h1v1h-1zM921 654h1v1h-1zM921 662h1v1h-1zM921 664h1v1h-1zM921 666h1v1h-1zM923 342h1v1h-1zM925 342h1v1h-1zM927 342h1v1h-1zM929 342h1v1h-1zM931 342h1v1h-1zM933 342h1v1h-1zM935 342h1v1h-1zM937 342h1v1h-1zM939 342h1v1h-1zM941 17h1v1h-1zM941 19h1v1h-1zM941 82h1v1h-1zM941 147h1v1h-1zM941 212h1v1h-1zM941 277h1v1h-1zM941 339h1v1h-1zM941 342h1v1h-1zM941 345h1v1h-1zM941 407h1v1h-1zM941 472h1v1h-1zM941 537h1v1h-1zM941 602h1v1h-1zM941 665h1v1h-1zM941 667h1v1h-1zM943 342h1v1h-1zM945 342h1v1h-1zM947 342h1v1h-1zM949 342h1v1h-1zM951 342h1v1h-1zM953 342h1v1h-1zM955 342h1v1h-1zM957 342h1v1h-1zM959 342h1v1h-1zM961 17h1v1h-1zM961 19h1v1h-1zM961 82h1v1h-1zM961 147h1v1h-1zM961 212h1v1h-1zM961 277h1v1h-1zM961 339h1v1h-1zM961 342h1v1h-1zM961 345h1v1h-1zM961 407h1v1h-1zM961 472h1v1h-1zM961 537h1v1h-1zM961 602h1v1h-1zM961 665h1v1h-1zM961 667h1v1h-1zM963 342h1v1h-1zM965 342h1v1h-1zM967 342h1v1h-1zM969 342h1v1h-1zM971 342h1v1h-1zM973 342h1v1h-1zM975 342h1v1h-1zM977 342h1v1h-1zM979 342h1v1h-1zM981 17h1v1h-1zM981 19h1v1h-1zM981 82h1v1h-1zM981 147h1v1h-1zM981 212h1v1h-1zM981 277h1v1h-1zM981 339h1v1h-1zM981 342h1v1h-1zM981 345h1v1h-1zM981 407h1v1h-1zM981 472h1v1h-1zM981 537h1v1h-1zM981 602h1v1h-1zM981 665h1v1h-1zM981 667h1v1h-1zM983 342h1v1h-1zM985 342h1v1h-1zM987 342h1v1h-1zM989 342h1v1h-1zM991 342h1v1h-1zM993 342h1v1h-1zM995 342h1v1h-1zM997 342h1v1h-1zM999 342h1v1h-1zM1001 17h1v1h-1zM1001 19h1v1h-1zM1001 82h1v1h-1zM1001 147h1v1h-1zM1001 212h1v1h-1zM1001 277h1v1h-1zM1001 339h1v1h-1zM1001 342h1v1h-1zM1001 345h1v1h-1zM1001 407h1v1h-1zM1001 472h1v1h-1zM1001 537h1v1h-1zM1001 602h1v1h-1zM1001 665h1v1h-1zM1001 667h1v1h-1zM1003 342h1v1h-1zM1005 342h1v1h-1zM1007 342h1v1h-1zM1009 342h1v1h-1zM1011 342h1v1h-1zM1013 342h1v1h-1zM1015 82h1v1h-1zM1015 147h1v1h-1zM1015 212h1v1h-1zM1015 277h1v1h-1zM1015 342h1v1h-1zM1015 407h1v1h-1zM1015 472h1v1h-1zM1015 537h1v1h-1zM1015 602h1v1h-1zM1017 82h1v1h-1zM1017 147h1v1h-1zM1017 212h1v1h-1zM1017 277h1v1h-1zM1017 342h1v1h-1zM1017 407h1v1h-1zM1017 472h1v1h-1zM1017 537h1v1h-1zM1017 602h1v1h-1zM1018 30h1v1h-1zM1018 43h1v1h-1zM1018 56h1v1h-1zM1018 69h1v1h-1zM1018 95h1v1h-1zM1018 108h1v1h-1zM1018 121h1v1h-1zM1018 134h1v1h-1zM1018 160h1v1h-1zM1018 173h1v1h-1zM1018 186h1v1h-1zM1018 199h1v1h-1zM1018 225h1v1h-1zM1018 238h1v1h-1zM1018 251h1v1h-1zM1018 264h1v1h-1zM1018 290h1v1h-1zM1018 303h1v1h-1zM1018 316h1v1h-1zM1018 329h1v1h-1zM1018 355h1v1h-1zM1018 368h1v1h-1zM1018 381h1v1h-1zM1018 394h1v1h-1zM1018 420h1v1h-1zM1018 433h1v1h-1zM1018 446h1v1h-1zM1018 459h1v1h-1zM1018 485h1v1h-1zM1018 498h1v1h-1zM1018 511h1v1h-1zM1018 524h1v1h-1zM1018 550h1v1h-1zM1018 563h1v1h-1zM1018 576h1v1h-1zM1018 589h1v1h-1zM1018 615h1v1h-1zM1018 628h1v1h-1zM1018 641h1v1h-1zM1018 654h1v1h-1zM1019 82h1v1h-1zM1019 147h1v1h-1zM1019 212h1v1h-1zM1019 277h1v1h-1zM1019 342h1v1h-1zM1019 407h1v1h-1zM1019 472h1v1h-1zM1019 537h1v1h-1zM1019 602h1v1h-1zM1020 30h1v1h-1zM1020 43h1v1h-1zM1020 56h1v1h-1zM1020 69h1v1h-1zM1020 95h1v1h-1zM1020 108h1v1h-1zM1020 121h1v1h-1zM1020 134h1v1h-1zM1020 160h1v1h-1zM1020 173h1v1h-1zM1020 186h1v1h-1zM1020 199h1v1h-1zM1020 225h1v1h-1zM1020 238h1v1h-1zM1020 251h1v1h-1zM1020 264h1v1h-1zM1020 290h1v1h-1zM1020 303h1v1h-1zM1020 316h1v1h-1zM1020 329h1v1h-1zM1020 355h1v1h-1zM1020 368h1v1h-1zM1020 381h1v1h-1zM1020 394h1v1h-1zM1020 420h1v1h-1zM1020 433h1v1h-1zM1020 446h1v1h-1zM1020 459h1v1h-1zM1020 485h1v1h-1zM1020 498h1v1h-1zM1020 511h1v1h-1zM1020 524h1v1h-1zM1020 550h1v1h-1zM1020 563h1v1h-1zM1020 576h1v1h-1zM1020 589h1v1h-1zM1020 615h1v1h-1zM1020 628h1v1h-1zM1020 641h1v1h-1zM1020 654h1v1h-1z" fill="#9c9272" shape-rendering="crispEdges"/><path d="M41 341h1v1h-1zM41 343h1v1h-1zM61 341h1v1h-1zM61 343h1v1h-1zM81 341h1v1h-1zM81 343h1v1h-1zM101 341h1v1h-1zM101 343h1v1h-1zM121 341h1v1h-1zM121 343h1v1h-1zM141 341h1v1h-1zM141 343h1v1h-1zM161 341h1v1h-1zM161 343h1v1h-1zM181 341h1v1h-1zM181 343h1v1h-1zM201 341h1v1h-1zM201 343h1v1h-1zM221 341h1v1h-1zM221 343h1v1h-1zM241 341h1v1h-1zM241 343h1v1h-1zM261 341h1v1h-1zM261 343h1v1h-1zM281 341h1v1h-1zM281 343h1v1h-1zM301 341h1v1h-1zM301 343h1v1h-1zM321 341h1v1h-1zM321 343h1v1h-1zM341 341h1v1h-1zM341 343h1v1h-1zM361 341h1v1h-1zM361 343h1v1h-1zM381 341h1v1h-1zM381 343h1v1h-1zM401 341h1v1h-1zM401 343h1v1h-1zM421 341h1v1h-1zM421 343h1v1h-1zM441 341h1v1h-1zM441 343h1v1h-1zM461 341h1v1h-1zM461 343h1v1h-1zM481 341h1v1h-1zM481 343h1v1h-1zM501 341h1v1h-1zM501 343h1v1h-1zM520 30h1v1h-1zM520 43h1v1h-1zM520 56h1v1h-1zM520 69h1v1h-1zM520 82h1v1h-1zM520 95h1v1h-1zM520 108h1v1h-1zM520 121h1v1h-1zM520 134h1v1h-1zM520 147h1v1h-1zM520 160h1v1h-1zM520 173h1v1h-1zM520 186h1v1h-1zM520 199h1v1h-1zM520 212h1v1h-1zM520 225h1v1h-1zM520 238h1v1h-1zM520 251h1v1h-1zM520 264h1v1h-1zM520 277h1v1h-1zM520 290h1v1h-1zM520 303h1v1h-1zM520 316h1v1h-1zM520 329h1v1h-1zM520 355h1v1h-1zM520 368h1v1h-1zM520 381h1v1h-1zM520 394h1v1h-1zM520 407h1v1h-1zM520 420h1v1h-1zM520 433h1v1h-1zM520 446h1v1h-1zM520 459h1v1h-1zM520 472h1v1h-1zM520 485h1v1h-1zM520 498h1v1h-1zM520 511h1v1h-1zM520 524h1v1h-1zM520 537h1v1h-1zM520 550h1v1h-1zM520 563h1v1h-1zM520 576h1v1h-1zM520 589h1v1h-1zM520 602h1v1h-1zM520 615h1v1h-1zM520 628h1v1h-1zM520 641h1v1h-1zM520 654h1v1h-1zM521 42h1v1h-1zM521 44h1v1h-1zM521 68h1v1h-1zM521 70h1v1h-1zM521 94h1v1h-1zM521 96h1v1h-1zM521 120h1v1h-1zM521 122h1v1h-1zM521 146h1v1h-1zM521 148h1v1h-1zM521 172h1v1h-1zM521 174h1v1h-1zM521 198h1v1h-1zM521 200h1v1h-1zM521 224h1v1h-1zM521 226h1v1h-1zM521 250h1v1h-1zM521 252h1v1h-1zM521 276h1v1h-1zM521 278h1v1h-1zM521 302h1v1h-1zM521 304h1v1h-1zM521 328h1v1h-1zM521 330h1v1h-1zM521 354h1v1h-1zM521 356h1v1h-1zM521 380h1v1h-1zM521 382h1v1h-1zM521 406h1v1h-1zM521 408h1v1h-1zM521 432h1v1h-1zM521 434h1v1h-1zM521 458h1v1h-1zM521 460h1v1h-1zM521 484h1v1h-1zM521 486h1v1h-1zM521 510h1v1h-1zM521 512h1v1h-1zM521 536h1v1h-1zM521 538h1v1h-1zM521 562h1v1h-1zM521 564h1v1h-1zM521 588h1v1h-1zM521 590h1v1h-1zM521 614h1v1h-1zM521 616h1v1h-1zM521 640h1v1h-1zM521 642h1v1h-1zM522 30h1v1h-1zM522 43h1v1h-1zM522 56h1v1h-1zM522 69h1v1h-1zM522 82h1v1h-1zM522 95h1v1h-1zM522 108h1v1h-1zM522 121h1v1h-1zM522 134h1v1h-1zM522 147h1v1h-1zM522 160h1v1h-1zM522 173h1v1h-1zM522 186h1v1h-1zM522 199h1v1h-1zM522 212h1v1h-1zM522 225h1v1h-1zM522 238h1v1h-1zM522 251h1v1h-1zM522 264h1v1h-1zM522 277h1v1h-1zM522 290h1v1h-1zM522 303h1v1h-1zM522 316h1v1h-1zM522 329h1v1h-1zM522 355h1v1h-1zM522 368h1v1h-1zM522 381h1v1h-1zM522 394h1v1h-1zM522 407h1v1h-1zM522 420h1v1h-1zM522 433h1v1h-1zM522 446h1v1h-1zM522 459h1v1h-1zM522 472h1v1h-1zM522 485h1v1h-1zM522 498h1v1h-1zM522 511h1v1h-1zM522 524h1v1h-1zM522 537h1v1h-1zM522 550h1v1h-1zM522 563h1v1h-1zM522 576h1v1h-1zM522 589h1v1h-1zM522 602h1v1h-1zM522 615h1v1h-1zM522 628h1v1h-1zM522 641h1v1h-1zM522 654h1v1h-1zM541 341h1v1h-1zM541 343h1v1h-1zM561 341h1v1h-1zM561 343h1v1h-1zM581 341h1v1h-1zM581 343h1v1h-1zM601 341h1v1h-1zM601 343h1v1h-1zM621 341h1v1h-1zM621 343h1v1h-1zM641 341h1v1h-1zM641 343h1v1h-1zM661 341h1v1h-1zM661 343h1v1h-1zM681 341h1v1h-1zM681 343h1v1h-1zM701 341h1v1h-1zM701 343h1v1h-1zM721 341h1v1h-1zM721 343h1v1h-1zM741 341h1v1h-1zM741 343h1v1h-1zM761 341h1v1h-1zM761 343h1v1h-1zM781 341h1v1h-1zM781 343h1v1h-1zM801 341h1v1h-1zM801 343h1v1h-1zM821 341h1v1h-1zM821 343h1v1h-1zM841 341h1v1h-1zM841 343h1v1h-1zM861 341h1v1h-1zM861 343h1v1h-1zM881 341h1v1h-1zM881 343h1v1h-1zM901 341h1v1h-1zM901 343h1v1h-1zM921 341h1v1h-1zM921 343h1v1h-1zM941 341h1v1h-1zM941 343h1v1h-1zM961 341h1v1h-1zM961 343h1v1h-1zM981 341h1v1h-1zM981 343h1v1h-1zM1001 341h1v1h-1zM1001 343h1v1h-1z" fill="#9c9272" fill-opacity="0.62" shape-rendering="crispEdges"/>
<g shape-rendering="crispEdges" fill="#a8956c">
<rect x="508" y="1" width="2" height="14"/><rect x="510" y="1" width="1" height="2"/><rect x="510" y="13" width="1" height="2"/>
<rect x="533" y="1" width="2" height="14"/><rect x="532" y="1" width="1" height="2"/><rect x="532" y="13" width="1" height="2"/>
</g>
<g fill="#ffa000">
<path d="M518 1H525L521.5 5z"/>
<path d="M517 6.5Q517 5 518.5 5H523.5Q525 5 525 6.5V14.5L523.5 16H518.5L517 14.5z"/>
<path d="M516 17H527L521.5 23.5z"/>
<path d="M515 25Q515 24 516 24H526Q527 24 527 25V36L521.5 39H520.5L515 36z"/>
</g>
<path d="M0 336L1 335H13L20 343L13 352H1L0 351z" fill="#00b000"/>
<path d="M0 336L1 335H13L14 336.2H0z" fill="#30e030"/>
<path d="M0 350.5H14.2L13 352H1L0 351z" fill="#008800"/>
<path d="M1010 343.4L1016 338V349z" fill="#00b400"/><rect x="1016" y="342.7" width="5" height="1.5" fill="#00b400"/>
<path d="M600 696.8H605.5V694L609.2 697.5L605.5 701V698.2H600z" fill="#ffa000"/>
<path d="M610 694H621.2L615.6 700.6z" fill="#ffa000"/>
<path d="M920 685H924L928 676H932.5" fill="none" stroke="#fff" stroke-width="1.6"/>
</svg>
<svg width="24" height="12" viewBox="0 0 24 12" style="position:absolute;left:773px;top:726.5px"><defs><linearGradient id="g2" x1="0" y1="0" x2="0" y2="1"><stop offset="0" stop-color="#fff"/><stop offset="0.65" stop-color="#e6e6e6"/><stop offset="1" stop-color="#808080"/></linearGradient></defs><path d="M12 0L23.5 11.5H0.5z" fill="url(#g2)"/></svg>
<div style="position:absolute;left:0;top:0;width:1024px;height:768px;will-change:transform">
<div class="t" id="t0" style="left:-0.4px;top:9px;font-size:19.2px;color:#fff;letter-spacing:0.0px;font-family:DejaVu Serif Condensed,DejaVu Serif,Liberation Serif,serif;-webkit-text-stroke:0.6px #fff;">Tek</div>
<div class="t" id="t1" style="left:34.9px;top:8px;font-size:14.75px;color:#fff;letter-spacing:1.15px;">Run</div>
<div class="t" id="t2" style="left:925.2px;top:8px;font-size:14.75px;color:#fff;letter-spacing:1.4px;">Trig’d</div>
<div class="t" id="t3" style="left:485.5px;top:681px;font-size:14.75px;color:#10b010;letter-spacing:0.3px;">1.00 V</div>
<div class="t" id="t4" style="left:588.7px;top:681px;font-size:14.75px;color:#fff;letter-spacing:0.43px;">100ns</div>
<div class="t" id="t5" style="left:621.9px;top:698px;font-size:14.75px;color:#ffa000;letter-spacing:0.63px;">0.000000 s</div>
<div class="t" id="t6" style="left:742.7px;top:681px;font-size:14.75px;color:#fff;letter-spacing:0.81px;">5.00GS/s</div>
<div class="t" id="t7" style="left:743.4px;top:698px;font-size:14.75px;color:#fff;letter-spacing:0.87px;">100k points</div>
<div class="t" id="t8" style="left:964.9px;top:681px;font-size:14.75px;color:#fff;letter-spacing:0.46px;">0.00 V</div>
<div class="t" id="t9" style="left:40.9px;top:728px;font-size:14.75px;color:#fff;letter-spacing:1.26px;">Coupling</div>
<div class="t" id="t10" style="left:37.8px;top:754px;font-size:14.75px;color:#fff;letter-spacing:0.2px;">DC</div>
<div class="t" id="t11" style="left:95px;top:754px;font-size:14.75px;color:#fff;letter-spacing:1.2px;">AC</div>
<div class="t" id="t12" style="left:146.6px;top:728px;font-size:14.75px;color:#fff;letter-spacing:1.08px;">Termination</div>
<div class="t" id="t13" style="left:148.7px;top:754px;font-size:14.75px;color:#fff;letter-spacing:1.55px;">1MΩ</div>
<div class="t" id="t14" style="left:206.5px;top:754px;font-size:14.75px;color:#fff;letter-spacing:1.25px;">50Ω</div>
<div class="t" id="t15" style="left:288.4px;top:728px;font-size:14.75px;color:#fff;letter-spacing:1.16px;">Invert</div>
<div class="t" id="t16" style="left:272.7px;top:754px;font-size:14.75px;color:#fff;letter-spacing:2.9px;">On</div>
<div class="t" id="t17" style="left:329.7px;top:754px;font-size:14.75px;color:#fff;letter-spacing:1.35px;">Off</div>
<div class="t" id="t18" style="left:388.5px;top:733px;font-size:14.75px;color:#fff;letter-spacing:0.86px;">Bandwidth</div>
<div class="t" id="t19" style="left:416.7px;top:750px;font-size:14.75px;color:#fff;letter-spacing:1.77px;">Full</div>
<div class="t" id="t20" style="left:545.6px;top:741px;font-size:14.75px;color:#fff;letter-spacing:0.28px;">Label</div>
<div class="t" id="t21" style="left:765.5px;top:748px;font-size:14.75px;color:#fff;letter-spacing:1.37px;">More</div>
<div class="t" id="t22" style="left:924.7px;top:741px;font-size:14.75px;color:#fff;letter-spacing:1.1px;">2 Apr</div>
<div class="t" id="t23" style="left:978.1px;top:741px;font-size:14.75px;color:#fff;letter-spacing:0.4px;">2025</div>
<div class="t" id="t24" style="left:915px;top:757px;font-size:14.75px;color:#fff;letter-spacing:0.57px;">23:37:31</div>
<div class="t" id="t25" style="left:516.3px;top:31px;font-size:14.75px;color:#000;letter-spacing:0px;-webkit-text-stroke:0.5px #000;">T</div>
<div class="t" id="t26" style="left:588.3px;top:698px;font-size:14.75px;color:#000;letter-spacing:0px;-webkit-text-stroke:0.5px #000;">T</div>
<div class="t" id="t27" style="left:518px;top:11px;font-size:12px;color:#000;letter-spacing:0px;font-weight:bold;-webkit-text-stroke:0;transform:scaleX(0.74);transform-origin:0 0;">T</div>
<div class="t" id="t28" style="left:451px;top:681px;font-size:14.75px;color:#000;letter-spacing:0px;">4</div>
<div class="t" id="t29" style="left:890px;top:681px;font-size:14.75px;color:#000;letter-spacing:0px;">4</div>
<div class="t" id="t30" style="left:522px;top:741px;font-size:14.75px;color:#000;letter-spacing:0px;">4</div>
<div class="t" id="t31" style="left:4.3px;top:743px;font-size:14.75px;color:#000;letter-spacing:0px;">4</div>
<div class="t" id="t32" style="left:3.6px;top:344px;font-size:14.75px;color:#000;letter-spacing:0px;">4</div>
</div>
</body></html>
